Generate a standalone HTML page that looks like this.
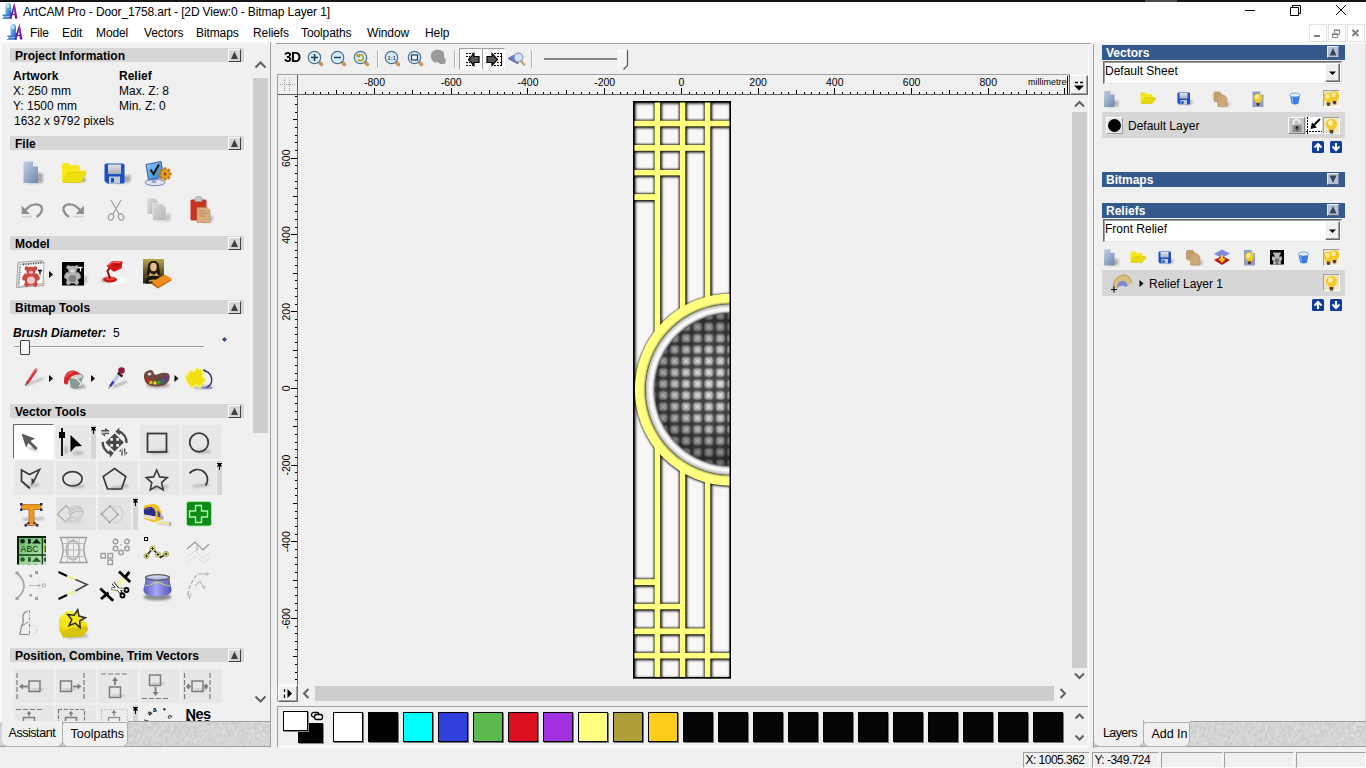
<!DOCTYPE html><html><head><meta charset="utf-8"><title>ArtCAM Pro - Door_1758.art</title><style>
html,body{margin:0;padding:0;width:1366px;height:768px;overflow:hidden;background:#f0f0f0;font-family:"Liberation Sans",sans-serif;font-size:12px;color:#000}
.a{position:absolute;box-sizing:border-box}
.t{white-space:nowrap;line-height:14px}
.b{font-weight:bold}
.ui{font-size:12px;letter-spacing:0.1px}
.hdr{background:#d6d6d6}
.hbtn{background:#d6d6d6;border:1px solid;border-color:#fff #404040 #404040 #fff}
.bh{background:#34598c;color:#fff;font-weight:bold}
svg{position:absolute;overflow:visible}
.tile{background:#e7e7e7}
</style></head><body>
<div class="a" style="left:0px;top:0px;width:1366px;height:2px;background:#161616"></div>
<div class="a" style="left:1145px;top:0px;width:32px;height:2px;background:#4c4c4c"></div>
<div class="a" style="left:0px;top:2px;width:1366px;height:39px;background:#fff"></div>
<div class="a" style="left:0px;top:41px;width:1366px;height:3px;background:#f8f8f8"></div>
<div class="a t" style="left:23px;top:5px;font-size:12px;letter-spacing:-0.135px">ArtCAM Pro - Door_1758.art - [2D View:0 - Bitmap Layer 1]</div>
<div class="a t" style="left:30px;top:26px;font-size:12px;letter-spacing:-0.1px">File</div>
<div class="a t" style="left:62px;top:26px;font-size:12px;letter-spacing:-0.1px">Edit</div>
<div class="a t" style="left:96px;top:26px;font-size:12px;letter-spacing:-0.1px">Model</div>
<div class="a t" style="left:144px;top:26px;font-size:12px;letter-spacing:-0.1px">Vectors</div>
<div class="a t" style="left:196px;top:26px;font-size:12px;letter-spacing:-0.1px">Bitmaps</div>
<div class="a t" style="left:253px;top:26px;font-size:12px;letter-spacing:-0.1px">Reliefs</div>
<div class="a t" style="left:301px;top:26px;font-size:12px;letter-spacing:-0.1px">Toolpaths</div>
<div class="a t" style="left:367px;top:26px;font-size:12px;letter-spacing:-0.1px">Window</div>
<div class="a t" style="left:425px;top:26px;font-size:12px;letter-spacing:-0.1px">Help</div>
<svg style="left:1240px;top:2px" width="126" height="20" viewBox="0 0 126 20"><g fill="none" stroke="#000" stroke-width="1"><path d="M5 8.5H15"/><path d="M50.5 5.5H58.5V13.5H50.5Z"/><path d="M52.5 5.5V3.5H60.5V11.5H58.5"/><path d="M96 3L106 13M106 3L96 13"/></g></svg>
<div class="a" style="left:1309px;top:24px;width:18px;height:18px;border:1px solid #e3e3e3;background:#fff"></div>
<div class="a" style="left:1328px;top:24px;width:18px;height:18px;border:1px solid #e3e3e3;background:#fff"></div>
<div class="a" style="left:1347px;top:24px;width:18px;height:18px;border:1px solid #e3e3e3;background:#fff"></div>
<svg style="left:1309px;top:24px" width="56" height="18" viewBox="0 0 56 18"><g fill="none" stroke="#808080"><path d="M5 12H11" stroke-width="2"/><path d="M23.5 10.5H28.5V13.5H23.5Z" stroke-width="1"/><path d="M25.5 9V6.5H30.500V10.5H29" stroke-width="1"/><path d="M23 9.8H29M25 6.2H31" stroke-width="1.2"/><path d="M43.5 6L49.500 12M49.5 6L43.500 12" stroke-width="2"/></g></svg>
<div class="a" style="left:0px;top:44px;width:271px;height:704px;background:#f0f0f0"></div>
<div class="a" style="left:270px;top:42px;width:1px;height:705px;background:#a0a0a0"></div>
<div class="a" style="left:0px;top:44px;width:2px;height:700px;background:#fafafa"></div>
<div class="a" style="left:253px;top:78px;width:15px;height:355px;background:#cdcdcd"></div>
<svg style="left:253px;top:58px" width="15" height="14" viewBox="0 0 15 14"><path d="M2.5 9.500L7.500 4.500L12.500 9.500" fill="none" stroke="#606060" stroke-width="2"/></svg>
<svg style="left:253px;top:692px" width="15" height="14" viewBox="0 0 15 14"><path d="M2.5 4.500L7.500 9.500L12.500 4.500" fill="none" stroke="#606060" stroke-width="2"/></svg>
<div class="a tex" style="left:0px;top:722px;width:270px;height:25px;background:#d4d4d4;"></div>
<svg style="left:0px;top:722px;z-index:0" width="270" height="25" viewBox="0 0 270 25"><defs><filter id="nz0" x="0" y="0" width="100%" height="100%"><feTurbulence type="fractalNoise" baseFrequency="0.35 0.25" numOctaves="2" seed="7"/><feColorMatrix type="matrix" values="0 0 0 0 0.83  0 0 0 0 0.83  0 0 0 0 0.83  0.9 0.9 0 0 -0.62"/></filter></defs><rect width="270" height="25" fill="#cbcbcb"/><rect width="270" height="25" fill="#e6e6e6" filter="url(#nz0)"/></svg>
<div class="a" style="left:128px;top:721px;width:142px;height:1px;background:#a0a0a0"></div>
<div class="a" style="left:0px;top:746px;width:276px;height:1px;background:#a0a0a0"></div>
<div class="a" style="left:2px;top:720px;width:61px;height:27px;background:#f0f0f0;border-radius:0 0 6px 6px;border-bottom:1px solid #b0b0b0;border-right:1px solid #b0b0b0"></div>
<div class="a" style="left:62px;top:722px;width:66px;height:25px;background:#f0f0f0;border:1px solid #b0b0b0;border-radius:3px 0 6px 6px"></div>
<div class="a t" style="left:8.5px;top:726px;font-size:12.5px;letter-spacing:-0.45px">Assistant</div>
<div class="a t" style="left:70.5px;top:727px;font-size:12.5px;letter-spacing:0px">Toolpaths</div>
<div class="a" style="left:271px;top:44px;width:822px;height:704px;background:#f0f0f0"></div>
<div class="a" style="left:276px;top:43px;width:815px;height:1px;background:#a0a0a0"></div>
<div class="a" style="left:277px;top:74px;width:793px;height:1px;background:#a0a0a0"></div>
<div class="a" style="left:277px;top:74px;width:1px;height:628px;background:#a0a0a0"></div>
<div class="a" style="left:278px;top:94px;width:792px;height:1px;background:#606060"></div>
<div class="a" style="left:297px;top:75px;width:1px;height:610px;background:#606060"></div>
<div class="a" style="left:1069px;top:75px;width:1px;height:20px;background:#606060"></div>
<div class="a" style="left:1070px;top:75px;width:18px;height:20px;background:#f0f0f0;border:1px solid;border-color:#fff #696969 #696969 #fff;box-shadow:inset -1px -1px 0 #a0a0a0"></div>
<svg style="left:1070px;top:75px" width="18" height="20" viewBox="0 0 18 20"><path d="M4 10.500H14L9 15.500Z" fill="#000"/><path d="M5 7.500H8M10 7.500H13" stroke="#000" stroke-width="1.4"/></svg>
<div class="a" style="left:1072px;top:112px;width:15px;height:556px;background:#cdcdcd"></div>
<svg style="left:1072px;top:97px" width="15" height="14" viewBox="0 0 15 14"><path d="M3 9.500L7.500 5L12 9.500" fill="none" stroke="#606060" stroke-width="2"/></svg>
<svg style="left:1072px;top:669px" width="15" height="14" viewBox="0 0 15 14"><path d="M3 4.500L7.500 9L12 4.500" fill="none" stroke="#606060" stroke-width="2"/></svg>
<div class="a" style="left:315px;top:686px;width:739px;height:15px;background:#cdcdcd"></div>
<svg style="left:299px;top:686px" width="14" height="15" viewBox="0 0 14 15"><path d="M9.5 3L5 7.500L9.500 12" fill="none" stroke="#606060" stroke-width="2"/></svg>
<svg style="left:1056px;top:686px" width="14" height="15" viewBox="0 0 14 15"><path d="M4.5 3L9 7.500L4.500 12" fill="none" stroke="#606060" stroke-width="2"/></svg>
<div class="a" style="left:278px;top:685px;width:20px;height:17px;background:#f0f0f0;border:1px solid;border-color:#fff #696969 #696969 #fff;box-shadow:inset -1px -1px 0 #a0a0a0"></div>
<svg style="left:278px;top:685px" width="20" height="17" viewBox="0 0 20 17"><path d="M9.5 4L14 8.500L9.500 13Z" fill="#000"/><path d="M6.5 4V7M6.500 9.500V13" stroke="#000" stroke-width="1.2"/></svg>
<div class="a" style="left:277px;top:706px;width:812px;height:1px;background:#a0a0a0"></div>
<div class="a" style="left:277px;top:706px;width:1px;height:41px;background:#a0a0a0"></div>
<div class="a" style="left:278px;top:746px;width:812px;height:1px;background:#fff"></div>
<div class="a" style="left:1088px;top:44px;width:1px;height:703px;background:#fafafa"></div>
<div class="a" style="left:1093px;top:44px;width:1px;height:704px;background:#a0a0a0"></div>
<div class="a" style="left:298px;top:723px;width:25px;height:20px;background:#000;box-shadow:1px 1px 0 #888"></div>
<div class="a" style="left:283px;top:711px;width:25px;height:20px;background:#fff;border:1px solid #000;box-shadow:1px 1px 0 #888"></div>
<svg style="left:310px;top:711px" width="14" height="10" viewBox="0 0 14 10"><rect x="1.500" y="1.500" width="7.500" height="4.500" rx="2" fill="none" stroke="#000" stroke-width="1.300"/><rect x="4.500" y="3.500" width="8" height="5" rx="2.200" fill="#f0f0f0" stroke="#000" stroke-width="1.300"/></svg>
<div class="a" style="left:333px;top:712px;width:30px;height:30px;background:#ffffff;border:1px solid #000;box-shadow:1px 1px 0 #777"></div>
<div class="a" style="left:368px;top:712px;width:30px;height:30px;background:#000000;border:1px solid #000;box-shadow:1px 1px 0 #777"></div>
<div class="a" style="left:403px;top:712px;width:30px;height:30px;background:#00ffff;border:1px solid #000;box-shadow:1px 1px 0 #777"></div>
<div class="a" style="left:438px;top:712px;width:30px;height:30px;background:#3040dc;border:1px solid #000;box-shadow:1px 1px 0 #777"></div>
<div class="a" style="left:473px;top:712px;width:30px;height:30px;background:#5cbb4f;border:1px solid #000;box-shadow:1px 1px 0 #777"></div>
<div class="a" style="left:508px;top:712px;width:30px;height:30px;background:#dc1020;border:1px solid #000;box-shadow:1px 1px 0 #777"></div>
<div class="a" style="left:543px;top:712px;width:30px;height:30px;background:#a030e0;border:1px solid #000;box-shadow:1px 1px 0 #777"></div>
<div class="a" style="left:578px;top:712px;width:30px;height:30px;background:#ffff80;border:1px solid #000;box-shadow:1px 1px 0 #777"></div>
<div class="a" style="left:613px;top:712px;width:30px;height:30px;background:#ada038;border:1px solid #000;box-shadow:1px 1px 0 #777"></div>
<div class="a" style="left:648px;top:712px;width:30px;height:30px;background:#fccd1c;border:1px solid #000;box-shadow:1px 1px 0 #777"></div>
<div class="a" style="left:683px;top:712px;width:30px;height:30px;background:#050505;border:1px solid #000;box-shadow:1px 1px 0 #777"></div>
<div class="a" style="left:718px;top:712px;width:30px;height:30px;background:#050505;border:1px solid #000;box-shadow:1px 1px 0 #777"></div>
<div class="a" style="left:753px;top:712px;width:30px;height:30px;background:#050505;border:1px solid #000;box-shadow:1px 1px 0 #777"></div>
<div class="a" style="left:788px;top:712px;width:30px;height:30px;background:#050505;border:1px solid #000;box-shadow:1px 1px 0 #777"></div>
<div class="a" style="left:823px;top:712px;width:30px;height:30px;background:#050505;border:1px solid #000;box-shadow:1px 1px 0 #777"></div>
<div class="a" style="left:858px;top:712px;width:30px;height:30px;background:#050505;border:1px solid #000;box-shadow:1px 1px 0 #777"></div>
<div class="a" style="left:893px;top:712px;width:30px;height:30px;background:#050505;border:1px solid #000;box-shadow:1px 1px 0 #777"></div>
<div class="a" style="left:928px;top:712px;width:30px;height:30px;background:#050505;border:1px solid #000;box-shadow:1px 1px 0 #777"></div>
<div class="a" style="left:963px;top:712px;width:30px;height:30px;background:#050505;border:1px solid #000;box-shadow:1px 1px 0 #777"></div>
<div class="a" style="left:998px;top:712px;width:30px;height:30px;background:#050505;border:1px solid #000;box-shadow:1px 1px 0 #777"></div>
<div class="a" style="left:1033px;top:712px;width:30px;height:30px;background:#050505;border:1px solid #000;box-shadow:1px 1px 0 #777"></div>
<svg style="left:1072px;top:708px" width="15" height="38" viewBox="0 0 15 38"><path d="M3.5 10.500L7.500 6.500L11.500 10.500M3.500 27.500L7.500 31.500L11.500 27.500" fill="none" stroke="#606060" stroke-width="2"/></svg>
<div class="a" style="left:1094px;top:44px;width:272px;height:704px;background:#f0f0f0"></div>
<div class="a" style="left:1365px;top:44px;width:1px;height:703px;background:#d8d8d8"></div>
<div class="a tex" style="left:1094px;top:722px;width:272px;height:25px;background:#d4d4d4;"></div>
<svg style="left:1094px;top:722px;z-index:0" width="272" height="25" viewBox="0 0 272 25"><defs><filter id="nz1094" x="0" y="0" width="100%" height="100%"><feTurbulence type="fractalNoise" baseFrequency="0.35 0.25" numOctaves="2" seed="7"/><feColorMatrix type="matrix" values="0 0 0 0 0.83  0 0 0 0 0.83  0 0 0 0 0.83  0.9 0.9 0 0 -0.62"/></filter></defs><rect width="272" height="25" fill="#cbcbcb"/><rect width="272" height="25" fill="#e6e6e6" filter="url(#nz1094)"/></svg>
<div class="a" style="left:1190px;top:721px;width:176px;height:1px;background:#a0a0a0"></div>
<div class="a" style="left:1094px;top:746px;width:272px;height:1px;background:#a0a0a0"></div>
<div class="a" style="left:1094px;top:720px;width:50px;height:27px;background:#f0f0f0;border-radius:0 0 6px 6px;border-bottom:1px solid #b0b0b0;border-right:1px solid #b0b0b0"></div>
<div class="a" style="left:1143px;top:722px;width:47px;height:25px;background:#f0f0f0;border:1px solid #b0b0b0;border-radius:3px 0 6px 6px"></div>
<div class="a t" style="left:1103px;top:726px;font-size:12.5px;letter-spacing:-0.6px">Layers</div>
<div class="a t" style="left:1151.5px;top:727px;font-size:12.5px;letter-spacing:-0.05px">Add In</div>
<div class="a" style="left:0px;top:748px;width:1366px;height:20px;background:#f0f0f0"></div>
<div class="a" style="left:1023px;top:752px;width:67px;height:16px;border:1px solid;border-color:#a0a0a0 #fff #fff #a0a0a0;padding-left:1.5px;line-height:14px;font-size:12px;white-space:nowrap;letter-spacing:-0.52px">X: 1005.362</div>
<div class="a" style="left:1092px;top:752px;width:67px;height:16px;border:1px solid;border-color:#a0a0a0 #fff #fff #a0a0a0;padding-left:1.5px;line-height:14px;font-size:12px;white-space:nowrap;letter-spacing:-0.52px">Y: -349.724</div>
<div class="a" style="left:1161px;top:752px;width:62px;height:16px;border:1px solid;border-color:#a0a0a0 #fff #fff #a0a0a0;padding-left:1.5px;line-height:14px;font-size:12px;white-space:nowrap;letter-spacing:-0.52px"></div>
<div class="a" style="left:1224px;top:752px;width:70px;height:16px;border:1px solid;border-color:#a0a0a0 #fff #fff #a0a0a0;padding-left:1.5px;line-height:14px;font-size:12px;white-space:nowrap;letter-spacing:-0.52px"></div>
<div class="a" style="left:1296px;top:752px;width:70px;height:16px;border:1px solid;border-color:#a0a0a0 #fff #fff #a0a0a0;padding-left:1.5px;line-height:14px;font-size:12px;white-space:nowrap;letter-spacing:-0.52px"></div>
<svg style="left:0;top:0" width="40" height="44" viewBox="0 0 40 44"><g transform="translate(2,3)"><defs><linearGradient id="lg2" x1="0" y1="0" x2="1" y2="1"><stop offset="0" stop-color="#9adcf0"/><stop offset="1" stop-color="#2060c8"/></linearGradient></defs><path d="M3.500 3.500Q3.500 0 6.500 0Q9 0 9 3.500V12.500H3.500Z" fill="url(#lg2)"/><ellipse cx="6" cy="3" rx="1.600" ry="2" fill="#d8f4fc" opacity="0.800"/><path d="M0.500 11.500H9.500V13H8.500V15.500H1.500V13H0.500Z" fill="#3a78d0"/><path d="M0 15.500H10" stroke="#5a98e0" stroke-width="1"/><path d="M2 13.500H8" stroke="#9ccaf0" stroke-width="0.800"/><path d="M12.500 0L15.500 15.500H13L12.500 12H10.500L9.500 15.500H7.500Z" fill="#7a1898"/><path d="M12.500 0L13.800 7L11 11.500Z" fill="#a030c0"/><path d="M11 11H12.600L12 6.500Z" fill="#fff"/><path d="M7.500 15.500L12.500 0L11 9Z" fill="#4828a0"/></g><g transform="translate(7,24)"><defs><linearGradient id="lg7" x1="0" y1="0" x2="1" y2="1"><stop offset="0" stop-color="#9adcf0"/><stop offset="1" stop-color="#2060c8"/></linearGradient></defs><path d="M3.500 3.500Q3.500 0 6.500 0Q9 0 9 3.500V12.500H3.500Z" fill="url(#lg7)"/><ellipse cx="6" cy="3" rx="1.600" ry="2" fill="#d8f4fc" opacity="0.800"/><path d="M0.500 11.500H9.500V13H8.500V15.500H1.500V13H0.500Z" fill="#3a78d0"/><path d="M0 15.500H10" stroke="#5a98e0" stroke-width="1"/><path d="M2 13.500H8" stroke="#9ccaf0" stroke-width="0.800"/><path d="M12.500 0L15.500 15.500H13L12.500 12H10.500L9.500 15.500H7.500Z" fill="#7a1898"/><path d="M12.500 0L13.800 7L11 11.500Z" fill="#a030c0"/><path d="M11 11H12.600L12 6.500Z" fill="#fff"/><path d="M7.500 15.500L12.500 0L11 9Z" fill="#4828a0"/></g></svg>
<svg style="left:0;top:0" width="1366" height="768" viewBox="0 0 1366 768"><g fill="#000"><rect x="305" y="92" width="1" height="2"/><rect x="313" y="92" width="1" height="2"/><rect x="320" y="92" width="1" height="2"/><rect x="328" y="92" width="1" height="2"/><rect x="336" y="90" width="1" height="4"/><rect x="343" y="92" width="1" height="2"/><rect x="351" y="92" width="1" height="2"/><rect x="359" y="92" width="1" height="2"/><rect x="366" y="92" width="1" height="2"/><rect x="374" y="88" width="1" height="6"/><rect x="382" y="92" width="1" height="2"/><rect x="389" y="92" width="1" height="2"/><rect x="397" y="92" width="1" height="2"/><rect x="405" y="92" width="1" height="2"/><rect x="412" y="90" width="1" height="4"/><rect x="420" y="92" width="1" height="2"/><rect x="428" y="92" width="1" height="2"/><rect x="435" y="92" width="1" height="2"/><rect x="443" y="92" width="1" height="2"/><rect x="451" y="88" width="1" height="6"/><rect x="458" y="92" width="1" height="2"/><rect x="466" y="92" width="1" height="2"/><rect x="474" y="92" width="1" height="2"/><rect x="481" y="92" width="1" height="2"/><rect x="489" y="90" width="1" height="4"/><rect x="497" y="92" width="1" height="2"/><rect x="504" y="92" width="1" height="2"/><rect x="512" y="92" width="1" height="2"/><rect x="520" y="92" width="1" height="2"/><rect x="527" y="88" width="1" height="6"/><rect x="535" y="92" width="1" height="2"/><rect x="543" y="92" width="1" height="2"/><rect x="550" y="92" width="1" height="2"/><rect x="558" y="92" width="1" height="2"/><rect x="566" y="90" width="1" height="4"/><rect x="573" y="92" width="1" height="2"/><rect x="581" y="92" width="1" height="2"/><rect x="589" y="92" width="1" height="2"/><rect x="597" y="92" width="1" height="2"/><rect x="604" y="88" width="1" height="6"/><rect x="612" y="92" width="1" height="2"/><rect x="620" y="92" width="1" height="2"/><rect x="627" y="92" width="1" height="2"/><rect x="635" y="92" width="1" height="2"/><rect x="643" y="90" width="1" height="4"/><rect x="650" y="92" width="1" height="2"/><rect x="658" y="92" width="1" height="2"/><rect x="666" y="92" width="1" height="2"/><rect x="673" y="92" width="1" height="2"/><rect x="681" y="88" width="1" height="6"/><rect x="689" y="92" width="1" height="2"/><rect x="696" y="92" width="1" height="2"/><rect x="704" y="92" width="1" height="2"/><rect x="712" y="92" width="1" height="2"/><rect x="719" y="90" width="1" height="4"/><rect x="727" y="92" width="1" height="2"/><rect x="735" y="92" width="1" height="2"/><rect x="742" y="92" width="1" height="2"/><rect x="750" y="92" width="1" height="2"/><rect x="758" y="88" width="1" height="6"/><rect x="765" y="92" width="1" height="2"/><rect x="773" y="92" width="1" height="2"/><rect x="781" y="92" width="1" height="2"/><rect x="788" y="92" width="1" height="2"/><rect x="796" y="90" width="1" height="4"/><rect x="804" y="92" width="1" height="2"/><rect x="811" y="92" width="1" height="2"/><rect x="819" y="92" width="1" height="2"/><rect x="827" y="92" width="1" height="2"/><rect x="834" y="88" width="1" height="6"/><rect x="842" y="92" width="1" height="2"/><rect x="850" y="92" width="1" height="2"/><rect x="857" y="92" width="1" height="2"/><rect x="865" y="92" width="1" height="2"/><rect x="873" y="90" width="1" height="4"/><rect x="880" y="92" width="1" height="2"/><rect x="888" y="92" width="1" height="2"/><rect x="896" y="92" width="1" height="2"/><rect x="903" y="92" width="1" height="2"/><rect x="911" y="88" width="1" height="6"/><rect x="919" y="92" width="1" height="2"/><rect x="926" y="92" width="1" height="2"/><rect x="934" y="92" width="1" height="2"/><rect x="942" y="92" width="1" height="2"/><rect x="949" y="90" width="1" height="4"/><rect x="957" y="92" width="1" height="2"/><rect x="965" y="92" width="1" height="2"/><rect x="972" y="92" width="1" height="2"/><rect x="980" y="92" width="1" height="2"/><rect x="988" y="88" width="1" height="6"/><rect x="995" y="92" width="1" height="2"/><rect x="1003" y="92" width="1" height="2"/><rect x="1011" y="92" width="1" height="2"/><rect x="1018" y="92" width="1" height="2"/><rect x="1026" y="90" width="1" height="4"/><rect x="1034" y="92" width="1" height="2"/><rect x="1041" y="92" width="1" height="2"/><rect x="1049" y="92" width="1" height="2"/><rect x="1057" y="92" width="1" height="2"/><rect x="1064" y="88" width="1" height="6"/><rect x="295" y="679" width="2" height="1"/><rect x="295" y="672" width="2" height="1"/><rect x="295" y="664" width="2" height="1"/><rect x="293" y="656" width="4" height="1"/><rect x="295" y="649" width="2" height="1"/><rect x="295" y="641" width="2" height="1"/><rect x="295" y="633" width="2" height="1"/><rect x="295" y="626" width="2" height="1"/><rect x="291" y="618" width="6" height="1"/><rect x="295" y="610" width="2" height="1"/><rect x="295" y="603" width="2" height="1"/><rect x="295" y="595" width="2" height="1"/><rect x="295" y="587" width="2" height="1"/><rect x="293" y="580" width="4" height="1"/><rect x="295" y="572" width="2" height="1"/><rect x="295" y="564" width="2" height="1"/><rect x="295" y="557" width="2" height="1"/><rect x="295" y="549" width="2" height="1"/><rect x="291" y="541" width="6" height="1"/><rect x="295" y="534" width="2" height="1"/><rect x="295" y="526" width="2" height="1"/><rect x="295" y="518" width="2" height="1"/><rect x="295" y="511" width="2" height="1"/><rect x="293" y="503" width="4" height="1"/><rect x="295" y="495" width="2" height="1"/><rect x="295" y="488" width="2" height="1"/><rect x="295" y="480" width="2" height="1"/><rect x="295" y="472" width="2" height="1"/><rect x="291" y="465" width="6" height="1"/><rect x="295" y="457" width="2" height="1"/><rect x="295" y="449" width="2" height="1"/><rect x="295" y="442" width="2" height="1"/><rect x="295" y="434" width="2" height="1"/><rect x="293" y="426" width="4" height="1"/><rect x="295" y="419" width="2" height="1"/><rect x="295" y="411" width="2" height="1"/><rect x="295" y="403" width="2" height="1"/><rect x="295" y="396" width="2" height="1"/><rect x="291" y="388" width="6" height="1"/><rect x="295" y="380" width="2" height="1"/><rect x="295" y="373" width="2" height="1"/><rect x="295" y="365" width="2" height="1"/><rect x="295" y="357" width="2" height="1"/><rect x="293" y="350" width="4" height="1"/><rect x="295" y="342" width="2" height="1"/><rect x="295" y="334" width="2" height="1"/><rect x="295" y="327" width="2" height="1"/><rect x="295" y="319" width="2" height="1"/><rect x="291" y="311" width="6" height="1"/><rect x="295" y="304" width="2" height="1"/><rect x="295" y="296" width="2" height="1"/><rect x="295" y="288" width="2" height="1"/><rect x="295" y="280" width="2" height="1"/><rect x="293" y="273" width="4" height="1"/><rect x="295" y="265" width="2" height="1"/><rect x="295" y="257" width="2" height="1"/><rect x="295" y="250" width="2" height="1"/><rect x="295" y="242" width="2" height="1"/><rect x="291" y="234" width="6" height="1"/><rect x="295" y="227" width="2" height="1"/><rect x="295" y="219" width="2" height="1"/><rect x="295" y="211" width="2" height="1"/><rect x="295" y="204" width="2" height="1"/><rect x="293" y="196" width="4" height="1"/><rect x="295" y="188" width="2" height="1"/><rect x="295" y="181" width="2" height="1"/><rect x="295" y="173" width="2" height="1"/><rect x="295" y="165" width="2" height="1"/><rect x="291" y="158" width="6" height="1"/><rect x="295" y="150" width="2" height="1"/><rect x="295" y="142" width="2" height="1"/><rect x="295" y="135" width="2" height="1"/><rect x="295" y="127" width="2" height="1"/><rect x="293" y="119" width="4" height="1"/><rect x="295" y="112" width="2" height="1"/><rect x="295" y="104" width="2" height="1"/><rect x="295" y="96" width="2" height="1"/></g><g font-family="Liberation Sans, sans-serif" font-size="10.5" fill="#000"><text x="374.5" y="86" text-anchor="middle">-800</text><text x="451.2" y="86" text-anchor="middle">-600</text><text x="528.0" y="86" text-anchor="middle">-400</text><text x="604.7" y="86" text-anchor="middle">-200</text><text x="681.4" y="86" text-anchor="middle">0</text><text x="758.1" y="86" text-anchor="middle">200</text><text x="834.8" y="86" text-anchor="middle">400</text><text x="911.6" y="86" text-anchor="middle">600</text><text x="988.3" y="86" text-anchor="middle">800</text><text transform="translate(289.500,618.6) rotate(-90)" text-anchor="middle">-600</text><text transform="translate(289.500,541.8) rotate(-90)" text-anchor="middle">-400</text><text transform="translate(289.500,465.1) rotate(-90)" text-anchor="middle">-200</text><text transform="translate(289.500,388.4) rotate(-90)" text-anchor="middle">0</text><text transform="translate(289.500,311.7) rotate(-90)" text-anchor="middle">200</text><text transform="translate(289.500,235.0) rotate(-90)" text-anchor="middle">400</text><text transform="translate(289.500,158.2) rotate(-90)" text-anchor="middle">600</text></g><g stroke="#999" stroke-width="1" stroke-dasharray="1 1"><path d="M280 84.500H295M284.500 78V91M289.500 78V91"/></g></svg>
<div class="a" style="left:1026px;top:76px;width:43px;height:12px;overflow:hidden;font-size:9px;line-height:12px;white-space:nowrap;letter-spacing:0px;padding-left:2px">millimetres</div>
<div class="a" style="left:1067px;top:76px;width:2px;height:18px;background:#f0f0f0;border-left:1px solid #000"></div>
<svg style="left:0;top:0" width="1366" height="768" viewBox="0 0 1366 768">
<defs>
<clipPath id="dc"><rect x="633.0" y="101.0" width="98.0" height="577.5"/></clipPath>
<filter id="bl" x="-5%" y="-5%" width="110%" height="110%"><feGaussianBlur stdDeviation="1.5"/></filter>
<filter id="bl2" x="-5%" y="-5%" width="110%" height="110%"><feGaussianBlur stdDeviation="0.8"/></filter>
<radialGradient id="cell" cx="0.5" cy="0.5" r="0.6"><stop offset="0" stop-color="#e0e0e0"/><stop offset="0.5" stop-color="#b0b0b0"/><stop offset="0.9" stop-color="#606060"/><stop offset="1" stop-color="#444444"/></radialGradient>
<pattern id="grid" x="611.70" y="275.30" width="11.43" height="11.43" patternUnits="userSpaceOnUse"><rect width="11.43" height="11.43" fill="#454545"/><rect x="0.6" y="0.6" width="10.23" height="10.23" fill="url(#cell)"/><path d="M3 3L8.43 8.43M8.43 3L3 8.43" stroke="#fff" stroke-opacity="0.6" stroke-width="1.1"/></pattern>
<radialGradient id="dome" gradientUnits="userSpaceOnUse" cx="719.0" cy="385.6" r="88"><stop offset="0" stop-color="#000" stop-opacity="0"/><stop offset="0.45" stop-color="#000" stop-opacity="0.1"/><stop offset="0.75" stop-color="#000" stop-opacity="0.38"/><stop offset="1" stop-color="#000" stop-opacity="0.6"/></radialGradient>
<radialGradient id="rim" gradientUnits="userSpaceOnUse" cx="731.0" cy="389.6" r="86"><stop offset="0.875" stop-color="#7a7a7a"/><stop offset="0.91" stop-color="#e8e8e8"/><stop offset="0.94" stop-color="#ffffff"/><stop offset="0.975" stop-color="#d0d0d0"/><stop offset="1" stop-color="#8a8a70"/></radialGradient>
</defs>
<rect x="633.0" y="101.0" width="98.0" height="577.5" fill="#f7f7f7"/>
<g clip-path="url(#dc)">
<g filter="url(#bl)" fill="#000" stroke="#000" opacity="1" transform="translate(0.9,0.9)"><rect x="654.6" y="101.0" width="5.6" height="577.5"/><rect x="679.8" y="101.0" width="5.5" height="577.5"/><rect x="704.8" y="101.0" width="5.5" height="577.5"/><rect x="633.0" y="120.7" width="98.0" height="5.6"/><rect x="633.0" y="652.9" width="98.0" height="5.6"/><rect x="633.0" y="145.0" width="74.3" height="5.8"/><rect x="633.0" y="628.4" width="74.3" height="5.8"/><rect x="633.0" y="169.9" width="49.5" height="5.5"/><rect x="633.0" y="603.8" width="49.5" height="5.5"/><rect x="633.0" y="194.1" width="24.2" height="5.9"/><rect x="633.0" y="579.2" width="24.2" height="5.9"/><circle cx="731.0" cy="389.6" r="90.8" fill="none" stroke-width="10.6"/><rect x="632.0" y="100.0" width="100.0" height="579.5" fill="none" stroke-width="5"/></g>
<g filter="url(#bl2)" fill="#1a1a00" stroke="#1a1a00" opacity="0.9"><rect x="654.6" y="101.0" width="5.6" height="577.5"/><rect x="679.8" y="101.0" width="5.5" height="577.5"/><rect x="704.8" y="101.0" width="5.5" height="577.5"/><rect x="633.0" y="120.7" width="98.0" height="5.6"/><rect x="633.0" y="652.9" width="98.0" height="5.6"/><rect x="633.0" y="145.0" width="74.3" height="5.8"/><rect x="633.0" y="628.4" width="74.3" height="5.8"/><rect x="633.0" y="169.9" width="49.5" height="5.5"/><rect x="633.0" y="603.8" width="49.5" height="5.5"/><rect x="633.0" y="194.1" width="24.2" height="5.9"/><rect x="633.0" y="579.2" width="24.2" height="5.9"/><circle cx="731.0" cy="389.6" r="90.8" fill="none" stroke-width="10.6"/></g>
<g fill="#ffff80" stroke="#ffff80"><rect stroke="none" x="654.6" y="101.0" width="5.6" height="577.5"/><rect stroke="none" x="679.8" y="101.0" width="5.5" height="577.5"/><rect stroke="none" x="704.8" y="101.0" width="5.5" height="577.5"/><rect stroke="none" x="633.0" y="120.7" width="98.0" height="5.6"/><rect stroke="none" x="633.0" y="652.9" width="98.0" height="5.6"/><rect stroke="none" x="633.0" y="145.0" width="74.3" height="5.8"/><rect stroke="none" x="633.0" y="628.4" width="74.3" height="5.8"/><rect stroke="none" x="633.0" y="169.9" width="49.5" height="5.5"/><rect stroke="none" x="633.0" y="603.8" width="49.5" height="5.5"/><rect stroke="none" x="633.0" y="194.1" width="24.2" height="5.9"/><rect stroke="none" x="633.0" y="579.2" width="24.2" height="5.9"/><circle cx="731.0" cy="389.6" r="90.8" fill="none" stroke-width="10.6"/></g>
<circle cx="731.0" cy="389.6" r="86" fill="#222" filter="url(#bl2)"/>
<circle cx="731.0" cy="389.6" r="85.5" fill="url(#rim)"/>
<circle cx="731.0" cy="389.6" r="76.5" fill="#222" filter="url(#bl2)"/>
<circle cx="731.0" cy="389.6" r="76" fill="url(#grid)"/>
<circle cx="731.0" cy="389.6" r="76" fill="url(#dome)"/>
</g>
<rect x="633.75" y="101.75" width="96.5" height="576.0" fill="none" stroke="#000" stroke-width="1.5"/>
</svg>
<div class="a t" style="left:284px;top:49px;font-size:15.5px;font-weight:bold;letter-spacing:-0.8px;line-height:16px;transform:scaleX(0.9);transform-origin:0 0">3D</div>
<svg style="left:0;top:0" width="1366" height="768" viewBox="0 0 1366 768"><g transform="translate(315,58)"><path d="M4.5 4.500L6.500 6.500" stroke="#c8955a" stroke-width="3.6" stroke-linecap="round"/><circle cx="-0.5" cy="-0.5" r="6.2" fill="#d5ecf8" stroke="#4f6f8f" stroke-width="1.2"/><path d="M-4 -0.500H3M-0.500 -4V3" stroke="#203a5a" stroke-width="1.5"/></g><g transform="translate(338,58)"><path d="M4.5 4.500L6.500 6.500" stroke="#c8955a" stroke-width="3.6" stroke-linecap="round"/><circle cx="-0.5" cy="-0.5" r="6.2" fill="#d5ecf8" stroke="#4f6f8f" stroke-width="1.2"/><path d="M-4 -0.500H3" stroke="#203a5a" stroke-width="1.5"/></g><g transform="translate(361,58)"><path d="M4.5 4.500L6.500 6.500" stroke="#c8955a" stroke-width="3.6" stroke-linecap="round"/><circle cx="-0.5" cy="-0.5" r="6.2" fill="#d5ecf8" stroke="#4f6f8f" stroke-width="1.2"/><path d="M-3 1.500A3 3 0 1 0 -2.500 -2.500M-3.500 -4V-1.500H-1" fill="none" stroke="#b89a10" stroke-width="1.500"/></g><g transform="translate(392,58)"><path d="M4.5 4.500L6.500 6.500" stroke="#c8955a" stroke-width="3.6" stroke-linecap="round"/><circle cx="-0.5" cy="-0.5" r="6.2" fill="#d5ecf8" stroke="#4f6f8f" stroke-width="1.2"/><text x="-0.5" y="2" font-size="6" font-weight="bold" text-anchor="middle" fill="#3a5a80" font-family="Liberation Sans, sans-serif">1:1</text></g><g transform="translate(415,58)"><path d="M4.5 4.500L6.500 6.500" stroke="#c8955a" stroke-width="3.6" stroke-linecap="round"/><circle cx="-0.5" cy="-0.5" r="6.2" fill="#d5ecf8" stroke="#4f6f8f" stroke-width="1.2"/><rect x="-3.5" y="-3" width="6" height="5" fill="#f0f8ff" stroke="#203a5a" stroke-width="1.2"/></g><path d="M431 56C431 51 435 49 439 50C443 50 445 53 444 57L446 60L445 64H440L438 62C434 64 431 60 431 56Z" fill="#9a9a9a"/><path d="M377.5 50V68" stroke="#b0b0b0" stroke-width="1"/><path d="M378.5 50V68" stroke="#fff" stroke-width="1"/><path d="M454.5 50V68" stroke="#b0b0b0" stroke-width="1"/><path d="M455.5 50V68" stroke="#fff" stroke-width="1"/><path d="M531.5 50V68" stroke="#b0b0b0" stroke-width="1"/><path d="M532.5 50V68" stroke="#fff" stroke-width="1"/></svg>
<div class="a" style="left:459px;top:48px;width:23px;height:22px;background:#fafafa;border:1px solid;border-color:#a0a0a0 #fff #fff #a0a0a0"></div>
<div class="a" style="left:482px;top:48px;width:23px;height:22px;background:#fafafa;border:1px solid;border-color:#a0a0a0 #fff #fff #a0a0a0"></div>
<svg style="left:0;top:0" width="1366" height="768" viewBox="0 0 1366 768"><g stroke="#000" stroke-width="1" stroke-dasharray="2 1"><path d="M466 53.500H473M466 56.500H470M466 62.500H470M466 65.500H473"/></g><path d="M479 56.500H474V53.500L468.500 59.500L474 65.500V62.500H479Z" fill="#555" stroke="#000" stroke-width="1.2"/><g stroke="#000" stroke-width="1" stroke-dasharray="2 1"><path d="M494 53.500H501M497 56.500H501M497 62.500H501M494 65.500H501"/><path d="M501.500 53V66" stroke-dasharray="none"/></g><path d="M487 56.500H492V53.500L497.500 59.500L492 65.500V62.500H487Z" fill="#555" stroke="#000" stroke-width="1.2"/><path d="M508 58.500L518 53V64Z" fill="#6a78c0" stroke="#5060a8" stroke-width="0.800"/><circle cx="518.500" cy="57.500" r="4.500" fill="#cfe0f4" stroke="#7a8ab8" stroke-width="1"/><path d="M521 61L524 64.500" stroke="#c8a070" stroke-width="2.500" stroke-linecap="round"/><path d="M544 59H617" stroke="#868686" stroke-width="2"/><path d="M544 60.500H617" stroke="#fff" stroke-width="1"/><path d="M618.500 50.500H627.500V65L623 70H618.500Z" fill="#f4f4f4" stroke="none"/><path d="M627.500 50V65.500L623.500 69.500" fill="none" stroke="#555" stroke-width="1.200"/><path d="M618.500 69V50.500H627" fill="none" stroke="#fff" stroke-width="1"/></svg>
<div class="a hdr" style="left:10px;top:48px;width:234px;height:14px;"></div>
<div class="a hbtn" style="left:228px;top:49px;width:13px;height:13px;"></div>
<svg style="left:228px;top:49px" width="13" height="13" viewBox="0 0 13 13"><path d="M3 10L6.500 2.500L10 10Z" fill="#404040"/></svg>
<div class="a t" style="left:15px;top:49px;font-weight:bold;font-size:12px;line-height:14px">Project Information</div>
<div class="a hdr" style="left:10px;top:136px;width:234px;height:14px;"></div>
<div class="a hbtn" style="left:228px;top:137px;width:13px;height:13px;"></div>
<svg style="left:228px;top:137px" width="13" height="13" viewBox="0 0 13 13"><path d="M3 10L6.500 2.500L10 10Z" fill="#404040"/></svg>
<div class="a t" style="left:15px;top:137px;font-weight:bold;font-size:12px;line-height:14px">File</div>
<div class="a hdr" style="left:10px;top:236px;width:234px;height:14px;"></div>
<div class="a hbtn" style="left:228px;top:237px;width:13px;height:13px;"></div>
<svg style="left:228px;top:237px" width="13" height="13" viewBox="0 0 13 13"><path d="M3 10L6.500 2.500L10 10Z" fill="#404040"/></svg>
<div class="a t" style="left:15px;top:237px;font-weight:bold;font-size:12px;line-height:14px">Model</div>
<div class="a hdr" style="left:10px;top:300px;width:234px;height:14px;"></div>
<div class="a hbtn" style="left:228px;top:301px;width:13px;height:13px;"></div>
<svg style="left:228px;top:301px" width="13" height="13" viewBox="0 0 13 13"><path d="M3 10L6.500 2.500L10 10Z" fill="#404040"/></svg>
<div class="a t" style="left:15px;top:301px;font-weight:bold;font-size:12px;line-height:14px">Bitmap Tools</div>
<div class="a hdr" style="left:10px;top:404px;width:234px;height:14px;"></div>
<div class="a hbtn" style="left:228px;top:405px;width:13px;height:13px;"></div>
<svg style="left:228px;top:405px" width="13" height="13" viewBox="0 0 13 13"><path d="M3 10L6.500 2.500L10 10Z" fill="#404040"/></svg>
<div class="a t" style="left:15px;top:405px;font-weight:bold;font-size:12px;line-height:14px">Vector Tools</div>
<div class="a hdr" style="left:10px;top:648px;width:234px;height:14px;"></div>
<div class="a hbtn" style="left:228px;top:649px;width:13px;height:13px;"></div>
<svg style="left:228px;top:649px" width="13" height="13" viewBox="0 0 13 13"><path d="M3 10L6.500 2.500L10 10Z" fill="#404040"/></svg>
<div class="a t" style="left:15px;top:649px;font-weight:bold;font-size:12px;line-height:14px">Position, Combine, Trim Vectors</div>
<div class="a t" style="left:13px;top:69px;font-weight:bold">Artwork</div>
<div class="a t" style="left:119px;top:69px;font-weight:bold">Relief</div>
<div class="a t" style="left:13px;top:84px;">X: 250 mm</div>
<div class="a t" style="left:119px;top:84px;">Max. Z: 8</div>
<div class="a t" style="left:13px;top:99px;">Y: 1500 mm</div>
<div class="a t" style="left:119px;top:99px;">Min. Z: 0</div>
<div class="a t" style="left:14px;top:114px;">1632 x 9792 pixels</div>
<div class="a t" style="left:13px;top:326px;font-weight:bold;font-style:italic">Brush Diameter:</div>
<div class="a t" style="left:113px;top:326px;">5</div>
<div class="a" style="left:14px;top:346px;width:190px;height:1px;background:#a0a0a0"></div>
<div class="a" style="left:14px;top:347px;width:190px;height:1px;background:#fff"></div>
<div class="a" style="left:20px;top:340px;width:10px;height:15px;background:#f4f4f4;border:1px solid #404040;border-radius:1px"></div>
<svg style="left:221px;top:336px" width="7" height="7" viewBox="0 0 7 7"><path d="M3.500 1L6 3.500L3.500 6L1 3.500Z" fill="#3a4a7a"/></svg>
<svg style="left:0;top:0" width="1366" height="768" viewBox="0 0 1366 768"><defs>
<linearGradient id="pg" x1="0" y1="0" x2="1" y2="1"><stop offset="0" stop-color="#c4d0e2"/><stop offset="1" stop-color="#6c86ae"/></linearGradient>
<linearGradient id="pgg" x1="0" y1="0" x2="1" y2="1"><stop offset="0" stop-color="#dcdcdc"/><stop offset="1" stop-color="#b4b4b4"/></linearGradient>
<linearGradient id="fl" x1="0" y1="0" x2="0" y2="1"><stop offset="0" stop-color="#e4e6ea"/><stop offset="1" stop-color="#a8aeb8"/></linearGradient>
<linearGradient id="scr" x1="0" y1="0" x2="1" y2="1"><stop offset="0" stop-color="#8fd0f4"/><stop offset="1" stop-color="#2a78c8"/></linearGradient>
<filter id="sb" x="-30%" y="-30%" width="160%" height="160%"><feGaussianBlur stdDeviation="0.9"/></filter>
<filter id="sb1" x="-20%" y="-20%" width="140%" height="140%"><feGaussianBlur stdDeviation="1"/></filter>
</defs><g transform="translate(23,161)"><path d="M10 12L20 12L20 22L4 22.500Z" fill="#a8a8a8" filter="url(#sb)"/><path d="M0.500 0.500H10L15 5.500V22H0.500Z" fill="url(#pg)"/><path d="M10 0.500V5.500H15Z" fill="#eef2f8"/></g><g transform="translate(61,162)"><path d="M6 20L24 20L25 16L10 16Z" fill="#a0a0a0" filter="url(#sb)"/><path d="M1 3.500Q1 1.500 3 1.500H8L10 3.500H17Q18.500 3.500 18.500 5V9H1Z" fill="#e2d40e"/><path d="M1 8V19Q1 20.500 2.500 20.500H19L25 10Q25.500 8.500 24 8.500H18.500V5Q18.500 3.500 17 3.500H10L8 1.500H3Q1 1.500 1 3.500Z" fill="#f6e81a"/><path d="M2 20.500L7 11.500Q7.500 10.500 9 10.500H24.500Q25.500 10.500 25 12L20 20.500Z" fill="#efe012" stroke="#d6c808" stroke-width="0.600"/></g><g transform="translate(104,163)"><path d="M14 14L27 12L26 19L12 21Z" fill="#a8a8a8" filter="url(#sb)"/><path d="M0.500 2Q0.500 0.500 2 0.500H19Q20.500 0.500 20.500 2V19Q20.500 20.500 19 20.500H3L0.500 18Z" fill="#1d50c2"/><rect x="4" y="1.500" width="13" height="9.500" fill="url(#fl)"/><rect x="5" y="13.500" width="11" height="7" fill="#c4cad4"/><rect x="7" y="15" width="3" height="4.500" fill="#1d50c2"/></g><g transform="translate(144,160)"><ellipse cx="11" cy="22.500" rx="10" ry="3.200" fill="#dfe4f2" stroke="#7a86b8" stroke-width="1"/><path d="M8 17L13 18L12 23H7.500Z" fill="#9aa4cc"/><path d="M2 4.500L17 1.500L19.500 17L4.500 20Z" fill="url(#scr)" stroke="#3860a8" stroke-width="1"/><path d="M6.500 9.500L9.500 14L15 4.500" fill="none" stroke="#101820" stroke-width="2"/><g transform="translate(21,14)"><circle r="4.600" fill="#d89018"/><g stroke="#c07c10" stroke-width="3"><path d="M-6.500 0H6.500M0 -6.500V6.500M-4.600 -4.600L4.600 4.600M-4.600 4.600L4.600 -4.600"/></g><circle r="4" fill="#e8a020"/><circle r="1.600" fill="#8a5a10"/></g></g><g transform="translate(0,0)"><path d="M22 216.500H32" stroke="#d0d0d0" stroke-width="1.600"/><path d="M21.600 205.400V213.900H29.800Z" fill="#8e8e8e"/><path d="M25.500 210Q31 203.500 37.400 204.400Q42.500 205.500 42 210Q41 214 37.400 216.300" fill="none" stroke="#8e8e8e" stroke-width="2.300" stroke-linecap="round"/></g><g transform="translate(0,0)"><path d="M73.500 216.500H83.500" stroke="#d0d0d0" stroke-width="1.600"/><path d="M83.900 205.400V213.900H75.700Z" fill="#8e8e8e"/><path d="M80 210Q74.500 203.500 68.100 204.400Q63 205.500 63.500 210Q64.500 214 68.100 216.300" fill="none" stroke="#8e8e8e" stroke-width="2.300" stroke-linecap="round"/></g><g transform="translate(107,199)"><g fill="none" stroke="#a4a4a4" stroke-width="1.300"><path d="M4 1L12 15M14 1L6 15"/><ellipse cx="4" cy="18" rx="2.600" ry="3.200" transform="rotate(25 4 18)"/><ellipse cx="14" cy="18" rx="2.600" ry="3.200" transform="rotate(-25 14 18)"/></g></g><g transform="translate(147,198)"><path d="M12 16L24 16L23 23L8 23Z" fill="#c4c4c4" filter="url(#sb)"/><path d="M0.500 0.500H8L11 3.500V16H0.500Z" fill="url(#pgg)"/><path d="M5.500 5.500H15L19 9.500V22.500H5.500Z" fill="url(#pgg)" stroke="#e8e8e8" stroke-width="0.600"/></g><g transform="translate(190,196)"><path d="M14 22L23 20L22 26L12 27Z" fill="#b0b0b0" filter="url(#sb)"/><rect x="0.500" y="3.500" width="16" height="21" rx="1.500" fill="#c83420"/><path d="M5 5.500V2.500Q5 0.500 8.500 0.500Q12 0.500 12 2.500V5.500Z" fill="#c0c4cc" stroke="#9098a4" stroke-width="0.600"/><path d="M7 11.500H17L20 14V26.500H7Z" fill="#d8ac7c" stroke="#b88c5c" stroke-width="0.600"/><path d="M9.500 15H16M9.500 17.500H17M9.500 20H15" stroke="#b08858" stroke-width="0.800"/></g></svg>
<svg style="left:0;top:0" width="1366" height="768" viewBox="0 0 1366 768"><g transform="translate(15,259)"><path d="M3 3.500L27 1.500L29 26.500L1.500 28.500Z" fill="#e4e4e4" stroke="#a8a8a8" stroke-width="1"/><path d="M5 5.500L29 3.500L28 24.500L3.500 27.500Z" fill="#fff" stroke="#b4b4b4" stroke-width="1"/><path d="M8 5.500L28.500 3.500" stroke="#555" stroke-width="2" stroke-dasharray="1 1.500"/><path d="M5.500 8L4 26" stroke="#888" stroke-width="1.600" stroke-dasharray="1 1.500"/><g transform="translate(16,17) scale(0.95)"><g fill="#c84844"><circle cx="-4.500" cy="-8" r="2.300"/><circle cx="4.500" cy="-8" r="2.300"/><circle cx="0" cy="-5" r="4.800"/><ellipse cx="0" cy="3.500" rx="7" ry="6.500"/><ellipse cx="-6.500" cy="1" rx="2.200" ry="4" transform="rotate(25 -6.500 1)"/><ellipse cx="6.500" cy="1" rx="2.200" ry="4" transform="rotate(-25 6.500 1)"/><circle cx="-4.500" cy="9" r="2.600"/><circle cx="4.500" cy="9" r="2.600"/></g><ellipse cx="0" cy="4.500" rx="4.200" ry="4" fill="#f4c8c4"/><ellipse cx="0" cy="-4" rx="2.200" ry="1.600" fill="#f4c0bc"/></g><path d="M23 11.500H27M25 11.500V15.500" stroke="#000" stroke-width="1.300"/></g><path d="M49 271.0L53 274.5L49 278.0Z" fill="#000"/><g transform="translate(62,262)"><path d="M20 14L26 14L24 22L18 23Z" fill="#c0c0c0" filter="url(#sb)"/><rect x="0" y="0" width="22" height="23.500" fill="#000"/><g transform="translate(10.500,12.500) scale(0.9)"><g fill="#b4b4b4"><circle cx="-4.500" cy="-8" r="2.300"/><circle cx="4.500" cy="-8" r="2.300"/><circle cx="0" cy="-5" r="4.800"/><ellipse cx="0" cy="3.500" rx="7" ry="6.500"/><ellipse cx="-6.500" cy="1" rx="2.200" ry="4" transform="rotate(25 -6.500 1)"/><ellipse cx="6.500" cy="1" rx="2.200" ry="4" transform="rotate(-25 6.500 1)"/><circle cx="-4.500" cy="9" r="2.600"/><circle cx="4.500" cy="9" r="2.600"/></g><ellipse cx="0" cy="4.500" rx="4.200" ry="4" fill="#808080"/><ellipse cx="0" cy="-4" rx="2.200" ry="1.600" fill="#e0e0e0"/></g><path d="M16.500 5.500H20.500M18.500 5.500V9.500" stroke="#fff" stroke-width="1.300"/></g><g transform="translate(100,260)"><ellipse cx="17" cy="20.500" rx="10" ry="3" fill="#fff" opacity="0.950" filter="url(#sb1)"/><ellipse cx="6" cy="20" rx="5" ry="2.500" fill="#b4b4b4" filter="url(#sb)"/><ellipse cx="10" cy="19.500" rx="7" ry="3" fill="#c41212"/><ellipse cx="10" cy="18.600" rx="5" ry="1.800" fill="#f04040"/><path d="M10 18.500L7.500 11L11 6" fill="none" stroke="#9c0c0c" stroke-width="2"/><path d="M6.500 6L12 1L22.500 1.500L21.500 8.500L14 12Z" fill="#d41818"/><path d="M14 12L21.500 8.500L20.500 12Z" fill="#fbeee8"/><path d="M8 5.500L12.500 2L20 2.500" fill="none" stroke="#f87070" stroke-width="1.200"/><path d="M12 6Q16 4 21 5" fill="none" stroke="#a80c0c" stroke-width="1"/></g><g transform="translate(143,259)"><defs><linearGradient id="ml" x1="0" y1="0" x2="0" y2="1"><stop offset="0" stop-color="#b8a850"/><stop offset="0.5" stop-color="#6a5a28"/><stop offset="1" stop-color="#2c2410"/></linearGradient></defs><rect x="0" y="0" width="21" height="24.500" fill="url(#ml)"/><path d="M5 7.500Q5 2 10.500 2Q16 2 16 7.500L17.500 16H3.500Z" fill="#241808"/><ellipse cx="10.500" cy="8" rx="3.300" ry="4.300" fill="#e4c08c"/><path d="M7 13.500Q10.500 17.500 14 13.500L15 17H6Z" fill="#d8b078"/><path d="M2 24.500Q3 16.500 10.500 16.500Q18 16.500 19 24.500Z" fill="#1c1408"/><path d="M6 22.500Q10 20 14 22.500" stroke="#caa070" stroke-width="1.600" fill="none"/><path d="M8.500 23L22 15.500L28.500 19.500L15 27.500Z" fill="#f08c18"/><path d="M8.500 23L15 27.500V29.500L8.500 25Z" fill="#b05808"/><path d="M15 27.500L28.500 19.500V21.500L15 29.500Z" fill="#d07010"/></g><g transform="translate(24,368)"><path d="M1.500 17.500L19 10.500" stroke="#b8b8b8" stroke-width="2.200" filter="url(#sb)"/><path d="M1 18L2.500 13.500L10.500 1.500L13 3L5 15Z" fill="#e02030"/><path d="M11.500 0L14 1.500L13 3L10.500 1.500Z" fill="#f07080"/><path d="M1 18L2.500 13.500L5 15Z" fill="#806050"/><path d="M3.500 13L11 2.200" stroke="#f88898" stroke-width="0.800"/></g><path d="M49 375.0L53 378.5L49 382.0Z" fill="#000"/><g transform="translate(63,369)"><ellipse cx="15" cy="17.500" rx="8" ry="2.500" fill="#a8a8a8" filter="url(#sb)"/><path d="M5.500 8L8 18.500Q12 21 17.500 18.500L20 7.500Z" fill="#8a9c94"/><ellipse cx="12.800" cy="7.500" rx="7.300" ry="3.200" fill="#c8d4d0" stroke="#6a7c78" stroke-width="0.800"/><path d="M12 8L17 13Q19 16 16 17" fill="none" stroke="#e8ecec" stroke-width="1.200"/><path d="M1 14Q0 3 9 1.500Q15 1.500 17 5.500Q10 5 7 9Q5 12 4.500 15.500Q2 16 1 14Z" fill="#d82424"/><path d="M3 8Q5 3.500 10 3" stroke="#f47878" stroke-width="1" fill="none"/></g><path d="M91 375.0L95 378.5L91 382.0Z" fill="#000"/><g transform="translate(107,367)"><path d="M6 20L20 14.500" stroke="#a8a8a8" stroke-width="2.200" filter="url(#sb)"/><circle cx="14.500" cy="3.500" r="3.300" fill="#8a1838"/><path d="M10.500 6L15.500 9.500" stroke="#301018" stroke-width="2.400"/><path d="M11.500 8L5 16.500" stroke="#d8dcf0" stroke-width="3"/><path d="M11.500 8L5 16.500" stroke="#8890c0" stroke-width="3" stroke-opacity="0.350"/><path d="M6.500 14.500L3 19.500" stroke="#2838b8" stroke-width="2.200"/><path d="M3.500 19L1.500 21.500" stroke="#555" stroke-width="1"/></g><g transform="translate(143,369)"><ellipse cx="15" cy="16.500" rx="12" ry="2.500" fill="#a8a8a8" filter="url(#sb)"/><path d="M1 9Q0 2 7 1Q10 0.500 10.500 3.500Q11 6.500 14 5.500Q19 3 24 4Q27.500 5 26.500 10Q25 17.500 13 17.500Q2 17.500 1 9Z" fill="#6e4a3c"/><ellipse cx="6.500" cy="5" rx="2" ry="1.600" fill="#f0f0f0" opacity="0.85"/><circle cx="4.500" cy="10.500" r="1.700" fill="#d02020"/><circle cx="8" cy="13.500" r="1.700" fill="#e8b818"/><circle cx="12" cy="14" r="1.700" fill="#e8e020"/><circle cx="16" cy="13.500" r="1.700" fill="#28a838"/><circle cx="20" cy="12" r="1.700" fill="#2860d8"/><circle cx="23" cy="9" r="1.600" fill="#6830a8"/></g><path d="M174.5 375.0L178.5 378.5L174.5 382.0Z" fill="#000"/><g transform="translate(185,367)"><ellipse cx="18" cy="20" rx="11" ry="2" fill="#b8b8b8" filter="url(#sb)"/><path d="M19 3.500Q28 6 26.500 15Q25.500 19 21 20.500" fill="none" stroke="#283078" stroke-width="1.300"/><circle cx="19" cy="3.500" r="1.200" fill="#283078"/><path d="M17 21H27" stroke="#5058a0" stroke-width="1"/><path d="M0.500 10L6 3.500L9 5L12 1L18.500 4.500L17 9L20.500 13L15 20L11 18L7 20.500L2.500 15.500Z" fill="#f0e010"/><path d="M0.500 10L6 3.500L9 5L12 1L18.500 4.500L17 9L20.500 13L15 20L11 18L7 20.500L2.500 15.500Z" fill="none" stroke="#f8f060" stroke-width="1.500" stroke-linejoin="round"/></g></svg>
<div class="a" style="left:13px;top:424px;width:41px;height:35px;background:#fff;border:1px solid;border-color:#696969 #fff #fff #696969"></div>
<div class="a tile" style="left:56px;top:425px;width:34px;height:34px;"></div>
<div class="a" style="left:91px;top:425px;width:5px;height:34px;background:#d6d6d6"></div>
<div class="a tile" style="left:140px;top:425px;width:39px;height:34px;"></div>
<div class="a tile" style="left:182px;top:425px;width:39px;height:34px;"></div>
<div class="a tile" style="left:14px;top:461px;width:40px;height:34px;"></div>
<div class="a tile" style="left:56px;top:461px;width:40px;height:34px;"></div>
<div class="a tile" style="left:98px;top:461px;width:40px;height:34px;"></div>
<div class="a tile" style="left:140px;top:461px;width:39px;height:34px;"></div>
<div class="a tile" style="left:182px;top:461px;width:34px;height:34px;"></div>
<div class="a" style="left:217px;top:461px;width:5px;height:34px;background:#d6d6d6"></div>
<div class="a" style="left:56px;top:497px;width:40px;height:33px;background:#e3e3e3"></div>
<div class="a" style="left:98px;top:497px;width:33px;height:33px;background:#e3e3e3"></div>
<div class="a" style="left:133px;top:497px;width:5px;height:33px;background:#d6d6d6"></div>
<svg style="left:0;top:0" width="1366" height="768" viewBox="0 0 1366 768"><path d="M91 427H96V428H95V429.5H96V430.5H94V434H93V430.5H91V429.5H92V428H91Z" fill="#000"/><path d="M217 463H222V464H221V465.5H222V466.5H220V470H219V466.5H217V465.5H218V464H217Z" fill="#000"/><path d="M133 499H138V500H137V501.5H138V502.5H136V506H135V502.5H133V501.5H134V500H133Z" fill="#000"/><g transform="translate(0,0)"><path d="M27 448L38 452L36 446Z" fill="#bcbcbc" filter="url(#sb)"/><path d="M21.500 433.500L35 438.500L30.500 441L37.500 448L35.500 450L28.500 443L26 447.500Z" fill="#5a5a5a"/></g><g transform="translate(0,0)"><ellipse cx="78" cy="453" rx="6" ry="2" fill="#bcbcbc" filter="url(#sb)"/><ellipse cx="66" cy="450" rx="2" ry="4" fill="#bcbcbc" filter="url(#sb)"/><path d="M62 428V456" stroke="#000" stroke-width="1.800"/><rect x="59" y="432" width="6" height="6" fill="#000"/><path d="M70.500 435L82 446L75.500 446.500L70.500 452Z" fill="#000"/></g><g transform="translate(114.6,442.4)"><path d="M0 -9.200L9.200 0L0 9.200L-9.200 0Z" fill="#484848"/><g fill="#fff"><rect x="-4.300" y="-4.300" width="2.600" height="2.600"/><rect x="1.700" y="-4.300" width="2.600" height="2.600"/><rect x="-4.300" y="1.700" width="2.600" height="2.600"/><rect x="1.700" y="1.700" width="2.600" height="2.600"/></g><g fill="none" stroke="#484848" stroke-width="2.400"><path d="M11.900 0.500A12 12 0 0 0 4.500 -11"/><path d="M-11.900 -0.500A12 12 0 0 0 -4.500 11"/></g><g fill="#484848"><path d="M4.600 -15L0.800 -10.600L5.400 -7.200Z"/><path d="M-4.600 15L-0.800 10.600L-5.400 7.200Z"/><path d="M-13.400 -12.400H-5.500V-11H-13.400ZM-9.500 -14.500L-5.300 -11.500H-9.500ZM-13.400 -9.700H-5.500V-8.300H-13.400ZM-13.600 -8.800L-9.500 -5.800V-8.800Z"/><path d="M6.700 6H8.100V13.200H6.700ZM7.600 5.600L4.200 9H7.600ZM9.400 6H10.800V13.200H9.400ZM9.900 13.600L13.300 10.200H9.900Z"/></g></g><g transform="translate(0,0)"><path d="M150 451L168 449L169 453L152 455Z" fill="#bcbcbc" filter="url(#sb)"/><rect x="147.500" y="433.500" width="19" height="18.500" fill="none" stroke="#3a3a3a" stroke-width="1.800"/></g><g transform="translate(0,0)"><ellipse cx="203" cy="451.500" rx="8" ry="2" fill="#bcbcbc" filter="url(#sb)"/><circle cx="199" cy="442.500" r="9.300" fill="none" stroke="#3a3a3a" stroke-width="1.800"/></g><g transform="translate(0,0)"><path d="M24 485L38 483L40 486L28 488Z" fill="#bcbcbc" filter="url(#sb)"/><path d="M30 488.500L21.500 481V470L29.500 474.500L39.500 469.500L33 483" fill="none" stroke="#3a3a3a" stroke-width="1.700"/><path d="M31.500 478L35 480.500L31.500 485.500Z" fill="#3a3a3a"/></g><g transform="translate(0,0)"><ellipse cx="77" cy="486" rx="8" ry="2" fill="#bcbcbc" filter="url(#sb)"/><ellipse cx="72.500" cy="478.800" rx="9.600" ry="7.200" fill="none" stroke="#3a3a3a" stroke-width="1.700"/></g><g transform="translate(0,0)"><path d="M110 487L128 484L129 487L112 490Z" fill="#bcbcbc" filter="url(#sb)"/><path d="M114.500 468.500L125.800 476.500L121.500 489H107.500L103.200 476.500Z" fill="none" stroke="#3a3a3a" stroke-width="1.700"/></g><g transform="translate(0,0)"><path d="M152 487L168 485L169 488L154 490Z" fill="#bcbcbc" filter="url(#sb)"/><path d="M156.7 470.0L159.7 476.9L167.2 477.6L161.6 482.6L163.2 489.9L156.7 486.1L150.2 489.9L151.8 482.6L146.2 477.6L153.7 476.9Z" fill="none" stroke="#3a3a3a" stroke-width="1.600"/></g><g transform="translate(0,0)"><path d="M192 485L208 483L209 486L194 488Z" fill="#bcbcbc" filter="url(#sb)"/><path d="M189.500 473.500A9.300 9.300 0 1 1 205.500 485.500" fill="none" stroke="#3a3a3a" stroke-width="1.700"/></g><g transform="translate(20,503)"><path d="M3 15L24 14L24 17L3 18Z" fill="#bcbcbc" filter="url(#sb)"/><path d="M1.500 1.500H21V6.500H14V20.500H17V22.500H6V20.500H9V6.500H1.500Z" fill="#e89a22" stroke="#b86c08" stroke-width="0.800"/><g fill="#282878"><rect x="0" y="0" width="2.500" height="2.500"/><rect x="20" y="0" width="2.500" height="2.500"/><rect x="0" y="5.500" width="2.500" height="2.500"/><rect x="20" y="5.500" width="2.500" height="2.500"/><rect x="4.500" y="21" width="2.500" height="2.500"/><rect x="16" y="21" width="2.500" height="2.500"/><rect x="7.500" y="19" width="2" height="2"/><rect x="13.500" y="19" width="2" height="2"/></g></g><g transform="translate(0,0)"><g fill="none" stroke="#aaa" stroke-width="1.200"><path d="M57.500 514L66 505.500L74 513.500L65.500 522Z"/><ellipse cx="76" cy="512" rx="7" ry="6" fill="#dcdcdc" stroke="#c4c4c4"/><path d="M70 512Q76 506 81 509M70 515Q76 509 83 512" stroke="#b8b8b8"/></g><ellipse cx="74" cy="521" rx="10" ry="2" fill="#d0d0d0" filter="url(#sb)"/></g><g transform="translate(0,0)"><g fill="none" stroke="#aaa" stroke-width="1.200"><path d="M101.500 514L110 506L118 514.500L109.500 522.500Z"/><path d="M112 507Q122 504 123 514Q123 522 114 523" stroke="#d0d0d0"/></g><g fill="#999"><circle cx="101.500" cy="514" r="1"/><circle cx="110" cy="506" r="1"/><circle cx="118" cy="514.500" r="1"/><circle cx="109.500" cy="522.500" r="1"/></g></g><g transform="translate(143,504)"><path d="M16 17.500L29 19L28 21.500L14 20Z" fill="#c0c0c0" filter="url(#sb)"/><path d="M0.500 4Q0.500 1.500 3 1L11 0Q14 0 15.500 2.500L18.500 8V15.500L12 18.500L1 15Z" fill="#f0c020"/><path d="M1 5Q4 2.500 8 3Q11.500 4 12.500 8V12.500L1 10.500Z" fill="#2c2c88"/><path d="M1 10.500L12.500 12.500V16.500L1 14Z" fill="#ecdcd0"/><path d="M2 6Q4.500 4 7 4.500" stroke="#7078d0" stroke-width="1" fill="none"/><path d="M14.500 6.500Q16.500 7 17.500 10V13.500L14.500 12.500Z" fill="#4848a8"/><path d="M17 11L20.500 12V16L17 15Z" fill="#a8a8b0"/><path d="M13 16.500L27 19.500L26.500 21L12.500 18.500Z" fill="#f4e88c"/><path d="M27 18V21.500" stroke="#a0a0a0" stroke-width="1.400"/></g><g transform="translate(186,501)"><rect x="0.500" y="0.500" width="25" height="24.500" rx="2.500" fill="#0c8c16" stroke="#a4e8a4" stroke-width="1"/><path d="M9.500 4.500H15.500V10H21.500V16H15.500V21.500H9.500V16H3.500V10H9.500Z" fill="none" stroke="#b4f4b4" stroke-width="1.400"/></g><g transform="translate(17,536)"><defs><linearGradient id="abc" x1="0" y1="0" x2="1" y2="1"><stop offset="0" stop-color="#5cb060"/><stop offset="0.5" stop-color="#8ed08e"/><stop offset="1" stop-color="#c8e8c4"/></linearGradient><clipPath id="abcc"><rect x="0" y="0" width="29" height="28.500"/></clipPath></defs><g clip-path="url(#abcc)"><rect width="29" height="29" fill="url(#abc)"/><path d="M0 1H29M1 0V29" stroke="#061c06" stroke-width="2"/><path d="M0 19H29M25.300 0V29" stroke="#123c14" stroke-width="1.300"/><g fill="#0a240a"><circle cx="5.500" cy="5.300" r="2.300"/><rect x="11" y="3" width="2.800" height="4.600"/><path d="M15 7.600L19.500 2.800L24 7.600Z"/><circle cx="29" cy="5.300" r="2.300"/></g><g fill="#2c5c30"><circle cx="5.500" cy="23.500" r="2.300"/><rect x="11" y="21.200" width="2.800" height="4.600"/><path d="M15 25.800L19.500 21L24 25.800Z"/><circle cx="29" cy="23.500" r="2.300"/></g><text x="3.500" y="15.800" font-size="8.600" font-family="Liberation Sans, sans-serif" fill="#0c300c" letter-spacing="0.200">ABC</text><text x="3.500" y="34" font-size="8.600" font-family="Liberation Sans, sans-serif" fill="#2c5c30" letter-spacing="0.200">ABC</text><text x="27" y="15.800" font-size="8.600" font-family="Liberation Sans, sans-serif" fill="#0c300c">E</text></g></g><g transform="translate(60,537)"><g fill="none" stroke="#9a9a9a" stroke-width="1.300"><path d="M0.500 0.500H26.500Q21 13 27 25.500H0Q6 13 0.500 0.500Z"/><path d="M2.500 6.500H24.500M3 13H24M2 19.500H25M7.500 0.500Q10 13 7 25.500M13.500 0.500V25.500M19.500 0.500Q17 13 20 25.500" stroke-width="0.800" stroke="#b0b0b0"/><ellipse cx="13" cy="13" rx="6.500" ry="9.300" stroke="#b8b8b8" stroke-width="2.200"/></g></g><g transform="translate(100,539)"><g fill="none" stroke="#9c9c9c" stroke-width="1.400"><rect x="1" y="14.500" width="4.500" height="4.500"/><rect x="8" y="14.500" width="4.500" height="4.500"/><rect x="8" y="21" width="4.500" height="4.500"/><circle cx="15.500" cy="2.500" r="2.300"/><circle cx="27" cy="2.500" r="2.300"/><circle cx="15.500" cy="9.500" r="2.300"/><circle cx="27" cy="9.500" r="2.300"/><circle cx="21" cy="13.500" r="2.300"/></g><circle cx="21" cy="6" r="0.800" fill="#9c9c9c"/></g><g transform="translate(144,537)"><rect x="0.500" y="0.500" width="3" height="3" fill="#fff" stroke="#000" stroke-width="1"/><path d="M2.500 19L8.500 11.500L14 17.500L16.500 20.500L22 17" fill="none" stroke="#222" stroke-width="1.600"/><g fill="#f4f4a0" stroke="#8a8a30" stroke-width="0.700"><circle cx="2.500" cy="19" r="2.600"/><circle cx="8.500" cy="11.500" r="2.600"/><circle cx="14" cy="17.500" r="2.600"/><circle cx="22" cy="17" r="2.600"/></g><g stroke="#000" stroke-width="0.800"><path d="M1 19H4M2.500 17.500V20.500M7 11.500H10M8.500 10V13M12.500 17.500H15.500M14 16V19M20.500 17H23.500M22 15.500V18.500"/></g></g><g transform="translate(186,541)"><path d="M1 8L9 1L17 9L23 3" fill="none" stroke="#9a9a9a" stroke-width="1.200"/><path d="M11 4V9M9.500 7.500L11 9.500L12.500 7.500" stroke="#aaa" stroke-width="0.800" fill="none"/><g stroke="#c8c8c8" stroke-width="1" stroke-dasharray="1.500 1.500" fill="none"><path d="M1 16L9 10L17 17L25 11M2 21L10 15L17 22L25 16"/></g></g><g transform="translate(0,0)"><path d="M17 573Q31 586 17 598.500" fill="none" stroke="#a8a8a8" stroke-width="1.800"/><path d="M36 573Q47 585 36 598" fill="none" stroke="#dcdcdc" stroke-width="1" stroke-dasharray="2 2"/><path d="M29 585.500H40M38 584L40.500 585.500L38 587" stroke="#b8b8b8" stroke-width="1" fill="none"/><g fill="#a0a0a0"><rect x="15.500" y="571.500" width="3" height="3"/><rect x="15.500" y="597" width="3" height="3"/><rect x="35" y="571" width="3" height="3"/><rect x="35" y="597" width="3" height="3"/><rect x="29.500" y="574.500" width="2.500" height="2.500"/><rect x="29.500" y="594" width="2.500" height="2.500"/></g><rect x="42.500" y="584" width="3" height="3" fill="none" stroke="#b0b0b0" stroke-width="0.800"/></g><g transform="translate(0,0)"><path d="M67 576L75.500 579.500M67 595L75.500 591" stroke="#f4f4a8" stroke-width="3"/><path d="M58.500 572L67 576M58.500 599L67 595" stroke="#000" stroke-width="2"/><path d="M75.500 579.500L87 584.500L75.500 591" fill="none" stroke="#4a4a4a" stroke-width="1.800"/><path d="M67 576L75.500 579.500M67 595L75.500 591" stroke="#c8c890" stroke-width="0.800" stroke-dasharray="1 1.500"/></g><g transform="translate(0,0)"><path d="M112.500 592L124 578" stroke="#f6f6b0" stroke-width="4.500"/><g stroke="#000" stroke-width="2.800"><path d="M119 571.500L130.200 582M129.400 572L124.500 578M100.300 588.600L113.200 600.700M101 599L108.400 592.600"/></g><g fill="#fff" stroke="#000" stroke-width="1.900"><circle cx="122.500" cy="595.500" r="2"/><circle cx="126.500" cy="590" r="2"/></g><path d="M113 583L121.500 593.500M111.500 588.500L125 589.500" stroke="#000" stroke-width="3.200"/><path d="M113 583L120.500 592.500M111.500 588.500L124 589.500" stroke="#fff" stroke-width="1.800"/></g><g transform="translate(143,574)"><defs><linearGradient id="bowl" x1="0" y1="0" x2="1" y2="0"><stop offset="0" stop-color="#5858c4"/><stop offset="0.45" stop-color="#a4a8f4"/><stop offset="1" stop-color="#5054bc"/></linearGradient></defs><ellipse cx="14.500" cy="23" rx="14" ry="3.500" fill="#8c8c8c" filter="url(#sb1)"/><path d="M2.500 3.500Q2.500 9 0.500 15Q-0.500 22 14.500 22.500Q29.500 22 28.500 15Q26.500 9 26.500 3.500Z" fill="url(#bowl)"/><path d="M2 12Q8 11 14.500 8Q21 11 27 12" fill="none" stroke="#c4cc70" stroke-width="1.100"/><ellipse cx="14.500" cy="3.500" rx="12" ry="2.800" fill="#c4c8e8" fill-opacity="0.700" stroke="#585c60" stroke-width="1.300"/><path d="M3.500 5Q4.500 9 7 11M25.500 5Q24.500 9 22 11" stroke="#7c8090" stroke-width="0.900" fill="none"/></g><g transform="translate(186,571)"><g fill="none" stroke="#b0b0b0" stroke-width="1.300"><path d="M2 24Q3 12 12 3" stroke-dasharray="4 2"/><path d="M12 3H22M20 1.500L22.500 3L20 4.500M9 15L14 10L18 17M16 15.500L18.500 17.500L19 14.500M1 22L3.500 27L5 22" stroke="#c0c0c0"/></g></g><g transform="translate(19,610)"><path d="M8.500 1Q3 3 4 9Q5 13 2.500 16L1 24.500H10" fill="none" stroke="#8c8c8c" stroke-width="1.200"/><path d="M10.500 0V26" stroke="#8c8c8c" stroke-width="1" stroke-dasharray="3 1.500 1 1.500"/><path d="M12 16Q18 14 18 20Q18 24 14 24.500" fill="none" stroke="#d8d8d8" stroke-width="1"/><path d="M3 16L9 12" stroke="#8c8c8c" stroke-width="1"/></g><g transform="translate(58,608)"><defs><linearGradient id="yf" x1="0" y1="0" x2="0" y2="1"><stop offset="0" stop-color="#fcf030"/><stop offset="0.6" stop-color="#f0e010"/><stop offset="1" stop-color="#c8b400"/></linearGradient></defs><path d="M8 28L29 26L30 29L10 30.500Z" fill="#b0b0b0" filter="url(#sb)"/><path d="M1 10L9 3L15 3.500L29 15.500L30 22L24 28.500L5 29.500L1 22Z" fill="url(#yf)"/><path d="M5 29.500Q6 21 14 20L29 18L30 22L24 28.500Z" fill="#d8c408"/><path d="M19.7 1.7L21.0 8.1L27.4 9.7L21.7 13.0L22.1 19.6L17.2 15.1L11.1 17.6L13.8 11.6L9.6 6.5L16.2 7.2Z" fill="#f4e618" stroke="#2a2a2a" stroke-width="1.500"/></g></svg>
<div class="a tile" style="left:14px;top:669px;width:40px;height:34px;"></div>
<div class="a tile" style="left:56px;top:669px;width:40px;height:34px;"></div>
<div class="a tile" style="left:98px;top:669px;width:40px;height:34px;"></div>
<div class="a tile" style="left:140px;top:669px;width:40px;height:34px;"></div>
<div class="a tile" style="left:182px;top:669px;width:40px;height:34px;"></div>
<div class="a tile" style="left:14px;top:705px;width:40px;height:16px;"></div>
<div class="a tile" style="left:56px;top:705px;width:40px;height:16px;"></div>
<div class="a" style="left:98px;top:705px;width:33px;height:16px;background:#ececec"></div>
<div class="a" style="left:133px;top:705px;width:5px;height:16px;background:#d6d6d6"></div>
<svg style="left:0;top:0" width="1366" height="768" viewBox="0 0 1366 768"><g transform="translate(0,0)"><path d="M17 673V699" stroke="#7c7c7c" stroke-width="1.200" stroke-dasharray="5 2"/><path d="M31 688H44V691H31Z" fill="#d2d2d2"/><rect x="29" y="681" width="11" height="10.500" fill="none" stroke="#7c7c7c" stroke-width="1.500"/><path d="M28 686.500H22" stroke="#7c7c7c" stroke-width="1.800"/><path d="M19 686.500L23 683.500V689.500Z" fill="#7c7c7c"/></g><g transform="translate(0,0)"><path d="M62.5 688H75.5V691H62.5Z" fill="#d2d2d2"/><rect x="60.5" y="681" width="11" height="10.500" fill="none" stroke="#7c7c7c" stroke-width="1.500"/><path d="M84 673V699" stroke="#7c7c7c" stroke-width="1.200" stroke-dasharray="5 2"/><path d="M73 686.500H78" stroke="#7c7c7c" stroke-width="1.800"/><path d="M81.500 686.500L77.500 683.500V689.500Z" fill="#7c7c7c"/></g><g transform="translate(0,0)"><path d="M101 674H128" stroke="#7c7c7c" stroke-width="1.200" stroke-dasharray="5 2"/><path d="M111.5 694H124.5V697H111.5Z" fill="#d2d2d2"/><rect x="109.5" y="687" width="11" height="10.500" fill="none" stroke="#7c7c7c" stroke-width="1.500"/><path d="M115 685V680" stroke="#7c7c7c" stroke-width="1.800"/><path d="M115 677L112 681H118Z" fill="#7c7c7c"/></g><g transform="translate(0,0)"><path d="M151.5 682H164.5V685H151.5Z" fill="#d2d2d2"/><rect x="149.5" y="675" width="11" height="10.500" fill="none" stroke="#7c7c7c" stroke-width="1.500"/><path d="M142 698.500H168" stroke="#7c7c7c" stroke-width="1.200" stroke-dasharray="5 2"/><path d="M155.500 687V692" stroke="#7c7c7c" stroke-width="1.800"/><path d="M155.500 696L152.500 692H158.500Z" fill="#7c7c7c"/></g><g transform="translate(0,0)"><path d="M184.500 673V699M210 673V699" stroke="#7c7c7c" stroke-width="1.200" stroke-dasharray="5 2"/><path d="M194 688H207V691H194Z" fill="#d2d2d2"/><rect x="192" y="681" width="11" height="10.500" fill="none" stroke="#7c7c7c" stroke-width="1.500"/><path d="M186 686.500L188.500 683.500L191 686.500L188.500 689.500ZM203.500 686.500L206 683.500L208.500 686.500L206 689.500Z" fill="#7c7c7c"/></g><clipPath id="r2c"><rect x="0" y="700" width="270" height="21"/></clipPath><g clip-path="url(#r2c)"><g transform="translate(0,0)"><path d="M16 709.500H42" stroke="#7c7c7c" stroke-width="1.200" stroke-dasharray="5 2"/><path d="M29 711L26.500 714H31.500Z" fill="#7c7c7c"/><path d="M29 713V716" stroke="#7c7c7c" stroke-width="1.500"/><rect x="23.500" y="717.500" width="11" height="10" fill="none" stroke="#7c7c7c" stroke-width="1.500"/></g><g transform="translate(0,0)"><rect x="58.500" y="709.500" width="26" height="20" fill="none" stroke="#7c7c7c" stroke-width="1.200" stroke-dasharray="4 1.500"/><path d="M71 711L68.500 714H73.500Z" fill="#7c7c7c"/><path d="M71 713V716" stroke="#7c7c7c" stroke-width="1.500"/><rect x="65.500" y="717.500" width="11" height="10" fill="none" stroke="#7c7c7c" stroke-width="1.500"/></g><g transform="translate(0,0)"><rect x="101.500" y="709.500" width="26" height="20" fill="none" stroke="#a0a0a0" stroke-width="1" stroke-dasharray="1 2"/><path d="M114 710L111.500 713H116.500Z" fill="#7c7c7c"/><path d="M114 712V716" stroke="#7c7c7c" stroke-width="1.200"/><rect x="108.500" y="717.500" width="11" height="10" fill="none" stroke="#8c8c8c" stroke-width="1.300"/></g><path d="M133 707H138V708H137V709.500H138V710.500H136V714H135V710.500H133V709.500H134V708H133Z" fill="#000"/><g transform="translate(0,0)"><path id="tcv" d="M147 724Q150 710 160 711.500Q168 713 170 724" fill="none"/><text font-family="Liberation Sans, sans-serif" font-size="7" font-weight="bold" fill="#000" letter-spacing="1.200"><textPath href="#tcv">x aa * c</textPath></text></g><g transform="translate(0,0)"><text x="185.500" y="718.800" font-family="Liberation Sans, sans-serif" font-size="14.500" font-weight="bold" fill="#000" letter-spacing="-0.500">Nes</text><text x="185.500" y="727.500" font-family="Liberation Sans, sans-serif" font-size="14.500" font-weight="bold" fill="#000" letter-spacing="-0.500">Nes</text></g></g></svg>
<div class="a bh" style="left:1102px;top:45px;width:243px;height:15px;"></div>
<div class="a t" style="left:1106px;top:46px;font-weight:bold;font-size:12px;color:#fff;line-height:14px">Vectors</div>
<div class="a" style="left:1327px;top:46px;width:12px;height:12px;background:#b4c2d8;border:1px solid;border-color:#e8f0fa #7484a0 #50607c #e8f0fa"></div>
<svg style="left:1327px;top:46px" width="12" height="12" viewBox="0 0 12 12"><path d="M2.500 9.500L6 2L9.500 9.500Z" fill="#3a4656"/></svg>
<div class="a" style="left:1103px;top:61px;width:239px;height:23px;background:#fff;border:1px solid;border-color:#696969 #e3e3e3 #e3e3e3 #696969;box-shadow:inset 1px 1px 0 #a0a0a0"></div>
<div class="a t" style="left:1105px;top:64px;font-size:12px">Default Sheet</div>
<div class="a" style="left:1325px;top:63px;width:15px;height:19px;background:#f0f0f0;border:1px solid;border-color:#fff #696969 #696969 #fff;box-shadow:inset -1px -1px 0 #a0a0a0"></div>
<svg style="left:1325px;top:63px" width="15" height="19" viewBox="0 0 15 19"><path d="M4 8.500H11L7.500 12Z" fill="#000"/></svg>
<div class="a bh" style="left:1102px;top:172px;width:243px;height:15px;"></div>
<div class="a t" style="left:1106px;top:173px;font-weight:bold;font-size:12px;color:#fff;line-height:14px">Bitmaps</div>
<div class="a" style="left:1327px;top:173px;width:12px;height:12px;background:#b4c2d8;border:1px solid;border-color:#e8f0fa #7484a0 #50607c #e8f0fa"></div>
<svg style="left:1327px;top:173px" width="12" height="12" viewBox="0 0 12 12"><path d="M2.500 2.500L6 10L9.500 2.500Z" fill="#3a4656"/></svg>
<div class="a bh" style="left:1102px;top:203px;width:243px;height:15px;"></div>
<div class="a t" style="left:1106px;top:204px;font-weight:bold;font-size:12px;color:#fff;line-height:14px">Reliefs</div>
<div class="a" style="left:1327px;top:204px;width:12px;height:12px;background:#b4c2d8;border:1px solid;border-color:#e8f0fa #7484a0 #50607c #e8f0fa"></div>
<svg style="left:1327px;top:204px" width="12" height="12" viewBox="0 0 12 12"><path d="M2.500 9.500L6 2L9.500 9.500Z" fill="#3a4656"/></svg>
<div class="a" style="left:1103px;top:219px;width:239px;height:23px;background:#fff;border:1px solid;border-color:#696969 #e3e3e3 #e3e3e3 #696969;box-shadow:inset 1px 1px 0 #a0a0a0"></div>
<div class="a t" style="left:1105px;top:222px;font-size:12px">Front Relief</div>
<div class="a" style="left:1325px;top:221px;width:15px;height:19px;background:#f0f0f0;border:1px solid;border-color:#fff #696969 #696969 #fff;box-shadow:inset -1px -1px 0 #a0a0a0"></div>
<svg style="left:1325px;top:221px" width="15" height="19" viewBox="0 0 15 19"><path d="M4 8.500H11L7.500 12Z" fill="#000"/></svg>
<div class="a" style="left:1102px;top:112px;width:243px;height:26px;background:#d6d6d6"></div>
<div class="a" style="left:1102px;top:270px;width:243px;height:26px;background:#d6d6d6"></div>
<div class="a t" style="left:1128px;top:119px;font-size:12px">Default Layer</div>
<div class="a t" style="left:1149px;top:277px;font-size:12px">Relief Layer 1</div>
<div class="a" style="left:1106px;top:117px;width:17px;height:17px;background:#e6e6e6;border:1px solid;border-color:#fff #a0a0a0 #a0a0a0 #fff"></div>
<div class="a" style="left:1108px;top:119px;width:13px;height:13px;background:#000;border-radius:50%"></div>
<div class="a" style="left:1288px;top:117px;width:17px;height:17px;background:#c4c4c4;border:1px solid;border-color:#fff #808080 #808080 #fff"></div>
<div class="a" style="left:1306px;top:117px;width:16px;height:17px;background:#fff"></div>
<div class="a" style="left:1323px;top:117px;width:17px;height:17px;background:#efe6c8;border:1px solid;border-color:#a0a0a0 #fff #fff #a0a0a0"></div>
<div class="a" style="left:1323px;top:274px;width:17px;height:17px;background:#efe6c8;border:1px solid;border-color:#a0a0a0 #fff #fff #a0a0a0"></div>
<div class="a" style="left:1323px;top:90px;width:17px;height:17px;background:#efe6c8;border:1px solid;border-color:#a0a0a0 #fff #fff #a0a0a0"></div>
<div class="a" style="left:1323px;top:249px;width:17px;height:17px;background:#efe6c8;border:1px solid;border-color:#a0a0a0 #fff #fff #a0a0a0"></div>
<svg style="left:0;top:0" width="1366" height="768" viewBox="0 0 1366 768"><g transform="translate(1312,141)"><rect x="0" y="0" width="12" height="12" rx="1.500" fill="#103c9c"/><path d="M6 10V3.500M2.500 6.500L6 3L9.500 6.500" fill="none" stroke="#fff" stroke-width="2.100"/></g><g transform="translate(1330,141)"><rect x="0" y="0" width="12" height="12" rx="1.500" fill="#103c9c"/><path d="M6 2V8.500M2.500 5.500L6 9L9.500 5.500" fill="none" stroke="#fff" stroke-width="2.100"/></g><g transform="translate(1312,299)"><rect x="0" y="0" width="12" height="12" rx="1.500" fill="#103c9c"/><path d="M6 10V3.500M2.500 6.500L6 3L9.500 6.500" fill="none" stroke="#fff" stroke-width="2.100"/></g><g transform="translate(1330,299)"><rect x="0" y="0" width="12" height="12" rx="1.500" fill="#103c9c"/><path d="M6 2V8.500M2.500 5.500L6 9L9.500 5.500" fill="none" stroke="#fff" stroke-width="2.100"/></g><g transform="translate(1103.5,90.5)"><path d="M8 10L15 10L15 16L4 16.500Z" fill="#b0b0b0" filter="url(#sb)"/><path d="M0.500 0.500H7L11 4V16.500H0.500Z" fill="url(#pg)"/><path d="M7 0.500V4H11Z" fill="#eef2f8"/></g><g transform="translate(1139.5,92)"><path d="M1 2Q1 0.500 2.500 0.500H6L7.500 2H12Q13 2 13 3.500V5.500H15.500Q16.500 5.500 16 7L12.500 11.500H1Z" fill="#f4e61a"/><path d="M1.500 11.500L5 6.500Q5.500 5.500 7 5.500H15.500Q16.500 5.500 16 7L12.500 11.500Z" fill="#e8d810" stroke="#d0c408" stroke-width="0.500"/></g><g transform="translate(1177,92)"><path d="M9 9L16 8L15 12L8 13Z" fill="#b4b4b4" filter="url(#sb)"/><path d="M0.500 1.500Q0.500 0.500 1.500 0.500H12Q13 0.500 13 1.500V11.500Q13 12.500 12 12.500H2L0.500 11Z" fill="#1d50c2"/><rect x="2.500" y="1" width="8" height="5.500" fill="url(#fl)"/><rect x="3.500" y="8" width="6.500" height="4.500" fill="#c4cad4"/><rect x="4.500" y="9" width="2" height="3" fill="#1d50c2"/></g><g transform="translate(1213,91)"><path d="M8 12L17 11L16 15.500L6 16Z" fill="#b8b8b8" filter="url(#sb)"/><path d="M1 0.500H7L9 3V11H1Z" fill="#c4a070"/><path d="M4.500 4H11L14 7V15.500H4.500Z" fill="#caa878" stroke="#b08c5c" stroke-width="0.500"/><path d="M1 1.500L0 2.500L1 3.500L0 4.500L1 5.500L0 6.500L1 7.500L0 8.500L1 9.500" stroke="#a88858" stroke-width="0.800" fill="none"/></g><g transform="translate(1252,91)"><path d="M0.500 0.500H8L11.500 4V16H0.500Z" fill="#8ea0c0"/><path d="M8 0.500V4H11.500Z" fill="#dfe6f2"/><g transform="translate(6,8.5) scale(0.82)"><path d="M-2 3.500H2V6.500H-2Z" fill="#6a3a10"/><path d="M-1.500 6.500H1.500V7.500H-1.500Z" fill="#201008"/><path d="M0 -7C3.500 -7 5.500 -4.500 5.500 -2C5.500 0.500 3.500 2 2.500 4H-2.500C-3.500 2 -5.500 0.500 -5.500 -2C-5.500 -4.500 -3.500 -7 0 -7Z" fill="#f4c828"/><ellipse cx="-1" cy="-3" rx="2.500" ry="2.800" fill="#fcf0a0"/></g></g><g transform="translate(1289.5,92.5)"><path d="M0.500 2.500L2 11Q5.500 13 9 11L10.500 2.500Z" fill="#3a7ce4"/><path d="M2.500 4L3.500 11" stroke="#88b4f4" stroke-width="1.200"/><ellipse cx="5.500" cy="2.500" rx="5.200" ry="2" fill="#e8f0fc" stroke="#5890e8" stroke-width="0.800"/></g><g transform="translate(1328.5,99) scale(0.9)"><path d="M-2 3.500H2V6.500H-2Z" fill="#6a3a10"/><path d="M-1.500 6.500H1.500V7.500H-1.500Z" fill="#201008"/><path d="M0 -7C3.500 -7 5.500 -4.500 5.500 -2C5.500 0.500 3.500 2 2.500 4H-2.500C-3.500 2 -5.500 0.500 -5.500 -2C-5.500 -4.500 -3.500 -7 0 -7Z" fill="#f4c828"/><ellipse cx="-1" cy="-3" rx="2.500" ry="2.800" fill="#fcf0a0"/></g><g transform="translate(1334.5,97.5) scale(0.9)"><path d="M-2 3.500H2V6.500H-2Z" fill="#6a3a10"/><path d="M-1.500 6.500H1.500V7.500H-1.500Z" fill="#201008"/><path d="M0 -7C3.500 -7 5.500 -4.500 5.500 -2C5.500 0.500 3.500 2 2.500 4H-2.500C-3.500 2 -5.500 0.500 -5.500 -2C-5.500 -4.500 -3.500 -7 0 -7Z" fill="#f4c828"/><ellipse cx="-1" cy="-3" rx="2.500" ry="2.800" fill="#fcf0a0"/></g><g transform="translate(1103.5,249)"><path d="M8 10L15 10L15 16L4 16.500Z" fill="#b0b0b0" filter="url(#sb)"/><path d="M0.500 0.500H7L11 4V16.500H0.500Z" fill="url(#pg)"/><path d="M7 0.500V4H11Z" fill="#eef2f8"/></g><g transform="translate(1129.5,251)"><path d="M1 2Q1 0.500 2.500 0.500H6L7.500 2H12Q13 2 13 3.500V5.500H15.500Q16.500 5.500 16 7L12.500 11.500H1Z" fill="#f4e61a"/><path d="M1.500 11.500L5 6.500Q5.500 5.500 7 5.500H15.500Q16.500 5.500 16 7L12.500 11.500Z" fill="#e8d810" stroke="#d0c408" stroke-width="0.500"/></g><g transform="translate(1158,251)"><path d="M9 9L16 8L15 12L8 13Z" fill="#b4b4b4" filter="url(#sb)"/><path d="M0.500 1.500Q0.500 0.500 1.500 0.500H12Q13 0.500 13 1.500V11.500Q13 12.500 12 12.500H2L0.500 11Z" fill="#1d50c2"/><rect x="2.500" y="1" width="8" height="5.500" fill="url(#fl)"/><rect x="3.500" y="8" width="6.500" height="4.500" fill="#c4cad4"/><rect x="4.500" y="9" width="2" height="3" fill="#1d50c2"/></g><g transform="translate(1186,249.5)"><path d="M8 12L17 11L16 15.500L6 16Z" fill="#b8b8b8" filter="url(#sb)"/><path d="M1 0.500H7L9 3V11H1Z" fill="#c4a070"/><path d="M4.500 4H11L14 7V15.500H4.500Z" fill="#caa878" stroke="#b08c5c" stroke-width="0.500"/><path d="M1 1.500L0 2.500L1 3.500L0 4.500L1 5.500L0 6.500L1 7.500L0 8.500L1 9.500" stroke="#a88858" stroke-width="0.800" fill="none"/></g><g transform="translate(1213,249)"><path d="M1 5L9 0.500L17 4.500L9 9Z" fill="#8088e0"/><path d="M1 11L9 7L17 11L9 16Z" fill="#b81818"/><path d="M9 6V11M6.500 9.500L9 12.500L11.500 9.500" stroke="#f4d020" stroke-width="2" fill="none"/></g><g transform="translate(1243.5,249.5)"><path d="M0.500 0.500H8L11.500 4V16H0.500Z" fill="#8ea0c0"/><path d="M8 0.500V4H11.500Z" fill="#dfe6f2"/><g transform="translate(6,8.5) scale(0.82)"><path d="M-2 3.500H2V6.500H-2Z" fill="#6a3a10"/><path d="M-1.500 6.500H1.500V7.500H-1.500Z" fill="#201008"/><path d="M0 -7C3.500 -7 5.500 -4.500 5.500 -2C5.500 0.500 3.500 2 2.500 4H-2.500C-3.500 2 -5.500 0.500 -5.500 -2C-5.500 -4.500 -3.500 -7 0 -7Z" fill="#f4c828"/><ellipse cx="-1" cy="-3" rx="2.500" ry="2.800" fill="#fcf0a0"/></g></g><g transform="translate(1270,250)"><rect width="14" height="14.500" fill="#000"/><g transform="translate(7,8) scale(0.56)"><g fill="#b8b8b8"><circle cx="-4.500" cy="-8" r="2.300"/><circle cx="4.500" cy="-8" r="2.300"/><circle cx="0" cy="-5" r="4.800"/><ellipse cx="0" cy="3.500" rx="7" ry="6.500"/><circle cx="-4.500" cy="9" r="2.600"/><circle cx="4.500" cy="9" r="2.600"/><ellipse cx="-7" cy="1" rx="2.200" ry="4"/><ellipse cx="7" cy="1" rx="2.200" ry="4"/></g><ellipse cx="0" cy="4.500" rx="4" ry="4" fill="#707070"/></g></g><g transform="translate(1298,251.5)"><path d="M0.500 2.500L2 11Q5.500 13 9 11L10.500 2.500Z" fill="#3a7ce4"/><path d="M2.500 4L3.500 11" stroke="#88b4f4" stroke-width="1.200"/><ellipse cx="5.500" cy="2.500" rx="5.200" ry="2" fill="#e8f0fc" stroke="#5890e8" stroke-width="0.800"/></g><g transform="translate(1328.5,258) scale(0.9)"><path d="M-2 3.500H2V6.500H-2Z" fill="#6a3a10"/><path d="M-1.500 6.500H1.500V7.500H-1.500Z" fill="#201008"/><path d="M0 -7C3.500 -7 5.500 -4.500 5.500 -2C5.500 0.500 3.500 2 2.500 4H-2.500C-3.500 2 -5.500 0.500 -5.500 -2C-5.500 -4.500 -3.500 -7 0 -7Z" fill="#f4c828"/><ellipse cx="-1" cy="-3" rx="2.500" ry="2.800" fill="#fcf0a0"/></g><g transform="translate(1334.5,256.5) scale(0.9)"><path d="M-2 3.500H2V6.500H-2Z" fill="#6a3a10"/><path d="M-1.500 6.500H1.500V7.500H-1.500Z" fill="#201008"/><path d="M0 -7C3.500 -7 5.500 -4.500 5.500 -2C5.500 0.500 3.500 2 2.500 4H-2.500C-3.500 2 -5.500 0.500 -5.500 -2C-5.500 -4.500 -3.500 -7 0 -7Z" fill="#f4c828"/><ellipse cx="-1" cy="-3" rx="2.500" ry="2.800" fill="#fcf0a0"/></g><g transform="translate(1331.5,126) scale(1.0)"><path d="M-2 3.500H2V6.500H-2Z" fill="#6a3a10"/><path d="M-1.500 6.500H1.500V7.500H-1.500Z" fill="#201008"/><path d="M0 -7C3.500 -7 5.500 -4.500 5.500 -2C5.500 0.500 3.500 2 2.500 4H-2.500C-3.500 2 -5.500 0.500 -5.500 -2C-5.500 -4.500 -3.500 -7 0 -7Z" fill="#f4c828"/><ellipse cx="-1" cy="-3" rx="2.500" ry="2.800" fill="#fcf0a0"/></g><g transform="translate(1331.5,283) scale(1.0)"><path d="M-2 3.500H2V6.500H-2Z" fill="#6a3a10"/><path d="M-1.500 6.500H1.500V7.500H-1.500Z" fill="#201008"/><path d="M0 -7C3.500 -7 5.500 -4.500 5.500 -2C5.500 0.500 3.500 2 2.500 4H-2.500C-3.500 2 -5.500 0.500 -5.500 -2C-5.500 -4.500 -3.500 -7 0 -7Z" fill="#f4c828"/><ellipse cx="-1" cy="-3" rx="2.500" ry="2.800" fill="#fcf0a0"/></g><g transform="translate(1288,117)"><path d="M5.500 8V5.500Q5.500 2.500 8.500 2.500Q11.500 2.500 11.500 5.500V6" fill="none" stroke="#f0f0f0" stroke-width="1.800"/><rect x="4.500" y="8" width="9" height="7" fill="#8c8c8c"/><path d="M9 13.500V10M7.500 11.500L9 9.500L10.500 11.500" stroke="#202020" stroke-width="1.200" fill="none"/></g><g transform="translate(1306,117)"><path d="M1.500 0V17M0 14.500H16" stroke="#000" stroke-width="1" stroke-dasharray="2 1"/><path d="M14 2L8 8" stroke="#000" stroke-width="2"/><path d="M4.500 12L6 5.500L11 10.500Z" fill="#000"/></g><g transform="translate(1111,273)"><path d="M2 14Q3 3 13 2Q19 2 21 10L17 12.500Q15 7 10.500 8Q6 9 6 15Z" fill="#d8c080"/><path d="M2 14Q3 3 13 2Q19 2 21 10" fill="none" stroke="#b89c50" stroke-width="1"/><path d="M6 15Q6 9 10.500 8Q15 7 17 12.500L15 14Q10 11 6 15Z" fill="#8088d0"/><path d="M0 16.500H6M3 13.500V19.500" stroke="#000" stroke-width="1.200"/></g><path d="M1139.500 280L1143.500 283.500L1139.500 287Z" fill="#000"/></svg>
</body></html>
